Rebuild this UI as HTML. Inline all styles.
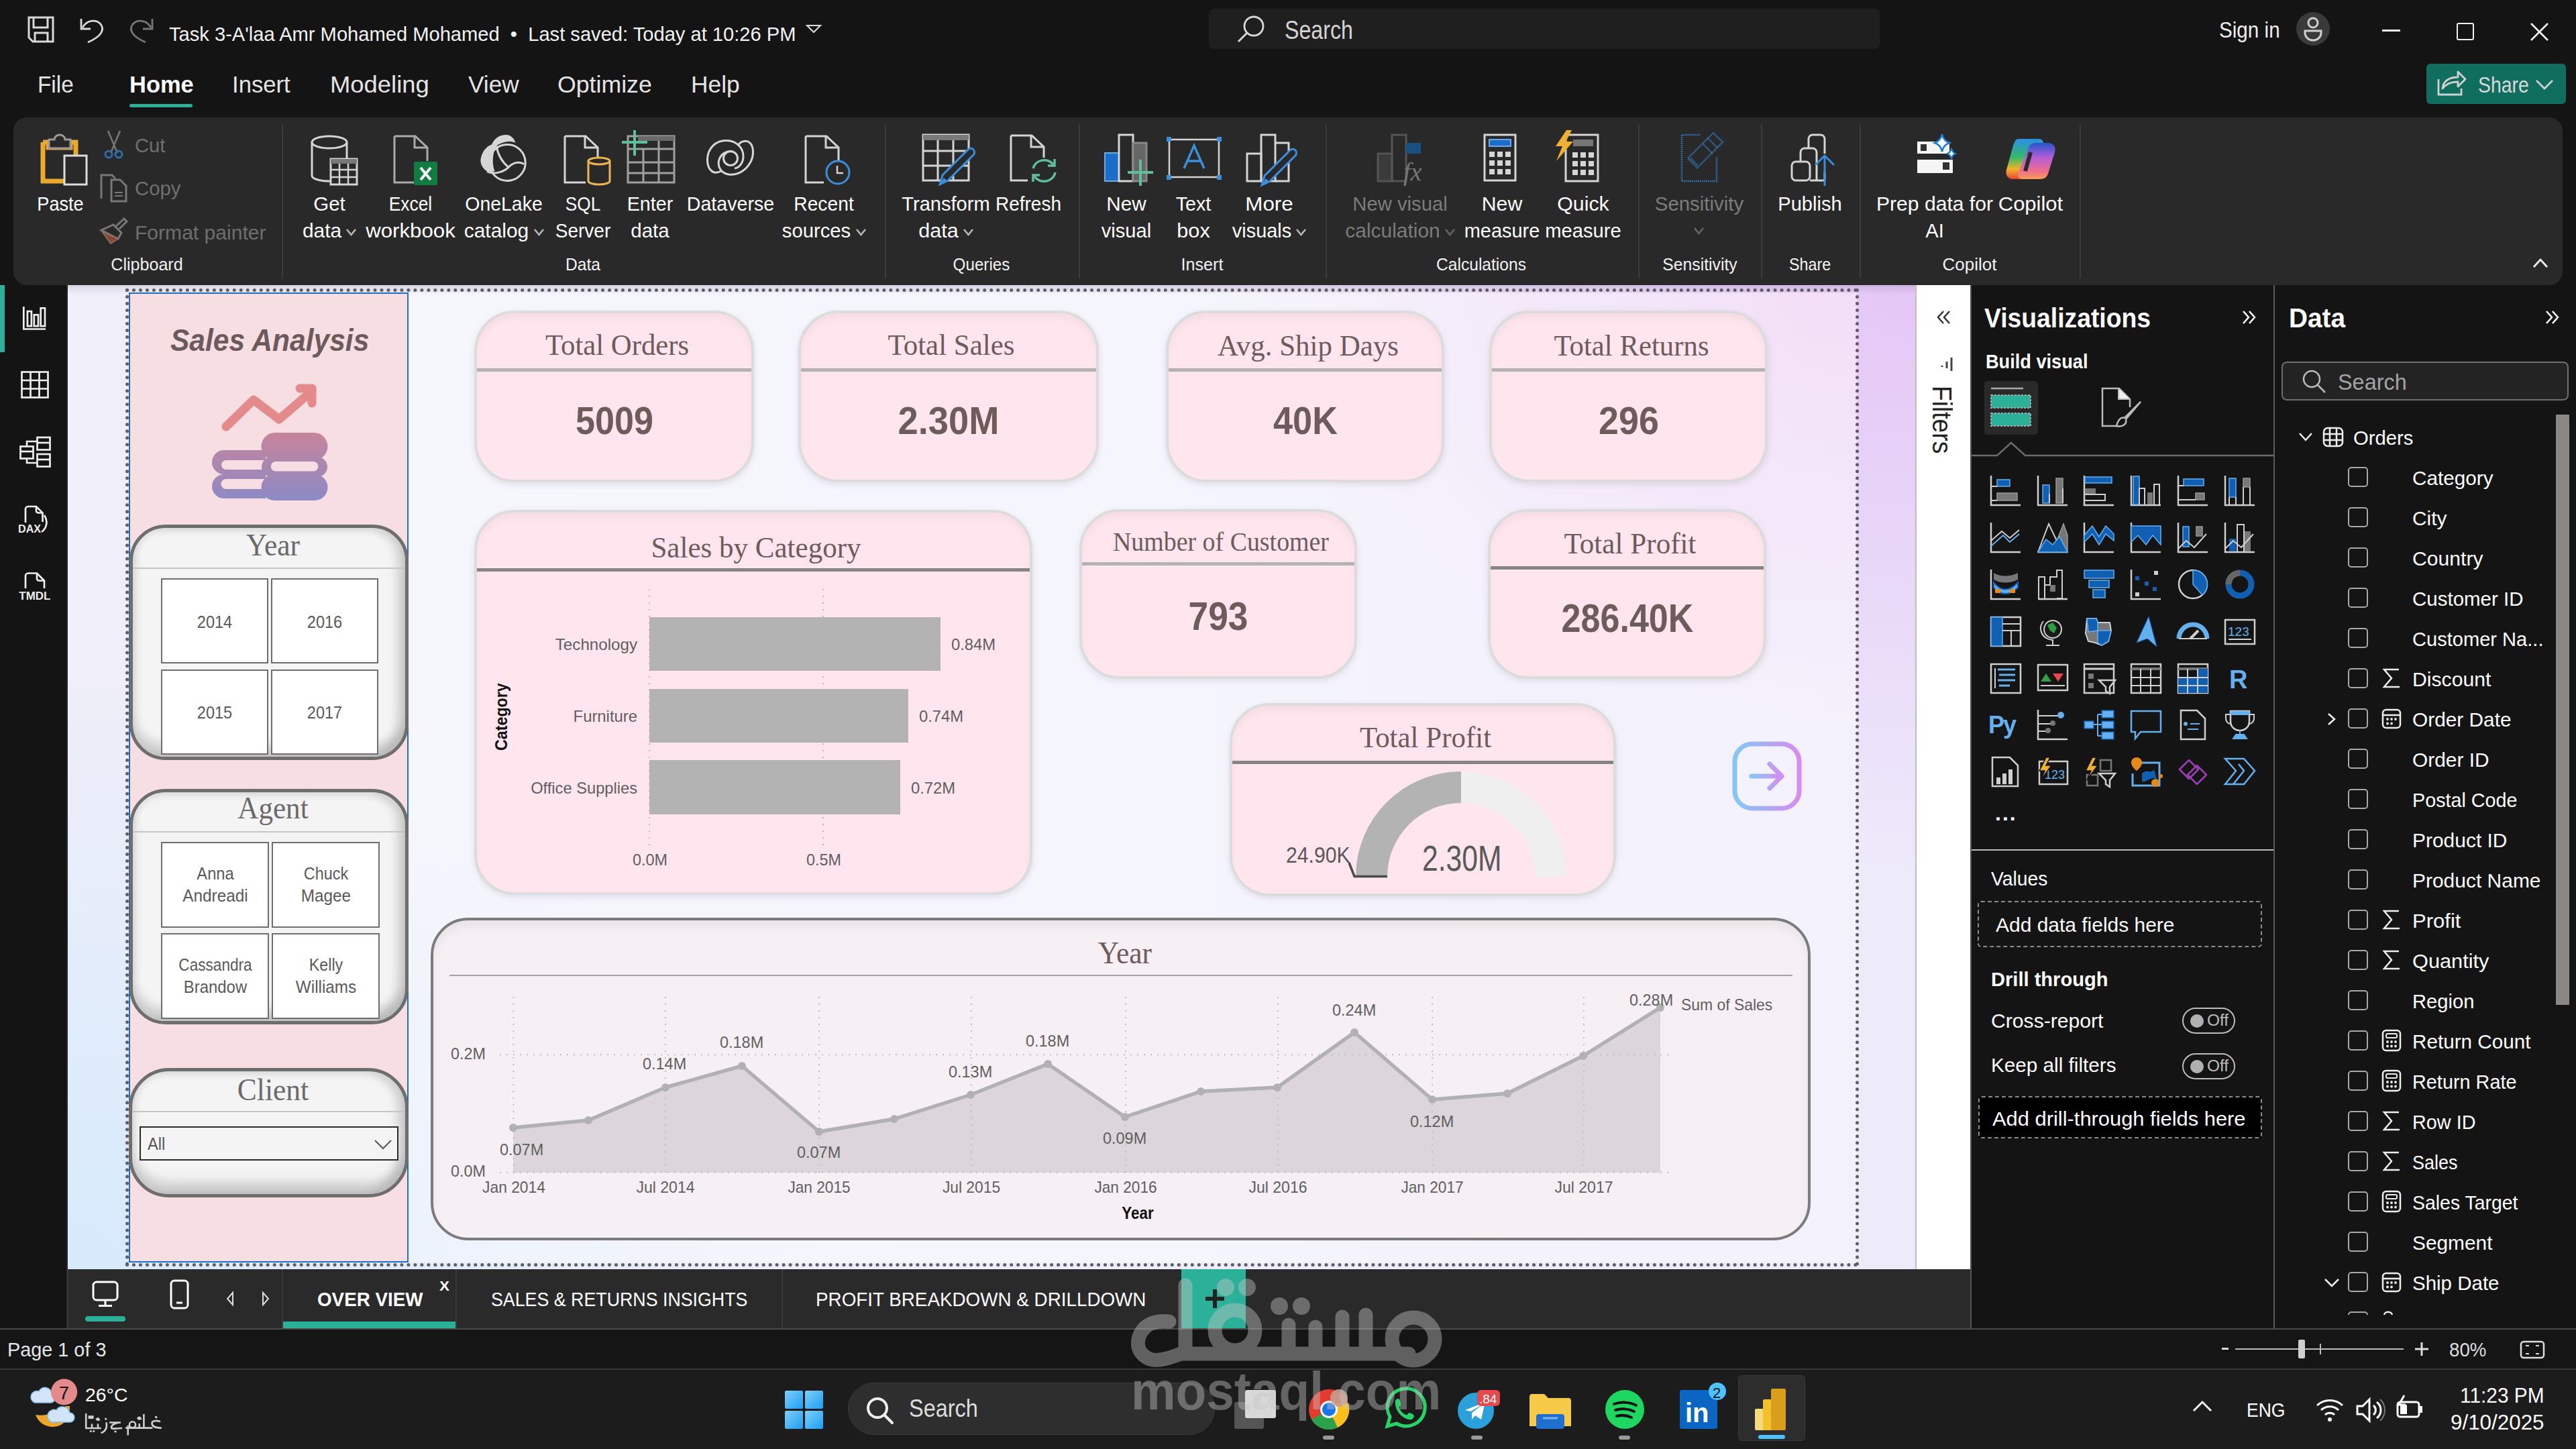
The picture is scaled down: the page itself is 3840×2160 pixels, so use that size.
<!DOCTYPE html>
<html><head><meta charset="utf-8">
<style>
*{margin:0;padding:0;box-sizing:border-box}
html,body{width:3840px;height:2160px;overflow:hidden;background:#141414;font-family:"Liberation Sans",sans-serif;color:#fff}
.a{position:absolute}
.t{position:absolute;white-space:nowrap;line-height:1}
svg{position:absolute;overflow:visible}
.sep{position:absolute;top:186px;width:2px;height:229px;background:#3c3c3c}
.card{position:absolute;background:#ffe6ee;border:4px solid #dcdcdc;border-radius:60px;box-shadow:0 3px 10px rgba(120,100,120,.16), inset 0 8px 10px rgba(0,0,0,.035)}
.hl{position:absolute;height:5px;background:#b1b1b1}
.slc{position:absolute;background:#f4f4f4;border:5px solid #6e6e6e;box-shadow:inset 0 -18px 16px rgba(0,0,0,.16), inset 0 8px 10px rgba(0,0,0,.04), inset 6px 0 10px rgba(0,0,0,.025), inset -14px 0 14px rgba(0,0,0,.11)}
.yb{position:absolute;background:#fff;border:2px solid #6e6e6e}
</style></head><body>
<div class="a" style="left:0;top:0;width:3840px;height:2160px;background:#141414"></div>
<div class="a" style="left:20px;top:175px;width:3800px;height:250px;background:#292929;border-radius:20px"></div>
<svg style="left:41px;top:24px;" width="40" height="40" viewBox="0 0 40 40"><path d="M2,2 H38 V38 H8 L2,32 Z" fill="none" stroke="#d8d8d8" stroke-width="3"/><path d="M9,2 V17 H30 V2" fill="none" stroke="#d8d8d8" stroke-width="3"/><path d="M11,38 V25 H30 V38" fill="none" stroke="#d8d8d8" stroke-width="3"/></svg>
<svg style="left:119px;top:26px;" width="36" height="40" viewBox="0 0 36 40"><path d="M2,2 V17 H16" fill="none" stroke="#d8d8d8" stroke-width="2.8"/><path d="M4,15 C10,4 24,2 31,10 C37,18 33,28 12,37" fill="none" stroke="#d8d8d8" stroke-width="2.8"/></svg>
<svg style="left:193px;top:26px;" width="36" height="40" viewBox="0 0 36 40"><path d="M34,2 V17 H20" fill="none" stroke="#777" stroke-width="2.8"/><path d="M32,15 C26,4 12,2 5,10 C-1,18 3,28 24,37" fill="none" stroke="#777" stroke-width="2.8"/></svg>
<div class="t" id="f1" style="left:252px;top:35.9px;font-size:29.5px;color:#f2f2f2;transform:scaleX(0.9870);transform-origin:0 0;"><span>Task 3-A'laa Amr Mohamed Mohamed&nbsp; •&nbsp; Last saved: Today at 10:26 PM</span></div>
<svg style="left:1201px;top:36px;" width="24" height="14" viewBox="0 0 24 14"><path d="M2,2 H22 L12,12 Z" fill="none" stroke="#ddd" stroke-width="2"/></svg>
<div class="a" style="left:1802px;top:13px;width:1000px;height:60px;background:#1f1f1f;border-radius:8px"></div>
<svg style="left:1844px;top:22px;" width="42" height="42" viewBox="0 0 42 42"><circle cx="25" cy="17" r="14" fill="none" stroke="#d8d8d8" stroke-width="2.8"/><line x1="15" y1="27" x2="2" y2="40" stroke="#d8d8d8" stroke-width="2.8"/></svg>
<div class="t" id="f2" style="left:1915px;top:26.3px;font-size:38px;color:#d4d4d4;transform:scaleX(0.8463);transform-origin:0 0;"><span>Search</span></div>
<div class="t" id="f3" style="left:3308px;top:27.1px;font-size:34px;color:#eeeeee;transform:scaleX(0.8724);transform-origin:0 0;"><span>Sign in</span></div>
<svg style="left:3422px;top:17px;" width="52" height="52" viewBox="0 0 52 52"><circle cx="26" cy="26" r="25" fill="#3a3a3a"/><circle cx="26" cy="17" r="7" fill="none" stroke="#cfcfcf" stroke-width="3"/><path d="M14,29 H38 V32 A12,11 0 0 1 14,32 Z" fill="none" stroke="#cfcfcf" stroke-width="3"/></svg>
<div class="a" style="left:3551px;top:44px;width:27px;height:3px;background:#eee"></div>
<div class="a" style="left:3662px;top:34px;width:26px;height:26px;border:2.5px solid #eee;border-radius:3px"></div>
<svg style="left:3772px;top:34px;" width="27" height="27" viewBox="0 0 27 27"><path d="M1,1 L26,26 M26,1 L1,26" stroke="#eee" stroke-width="2.6"/></svg>
<div class="t" id="f4" style="left:56px;top:108.6px;font-size:34.6px;color:#e4e4e4;transform:scaleX(0.9643);transform-origin:0 0;"><span>File</span></div>
<div class="t" id="f5" style="left:193px;top:108.6px;font-size:34.6px;color:#ffffff;font-weight:bold;transform:scaleX(0.9964);transform-origin:0 0;"><span>Home</span></div>
<div class="t" id="f6" style="left:346px;top:108.6px;font-size:34.6px;color:#e4e4e4;transform:scaleX(1.0028);transform-origin:0 0;"><span>Insert</span></div>
<div class="t" id="f7" style="left:492px;top:108.6px;font-size:34.6px;color:#e4e4e4;transform:scaleX(1.0527);transform-origin:0 0;"><span>Modeling</span></div>
<div class="t" id="f8" style="left:698px;top:108.6px;font-size:34.6px;color:#e4e4e4;transform:scaleX(1.0189);transform-origin:0 0;"><span>View</span></div>
<div class="t" id="f9" style="left:831px;top:108.6px;font-size:34.6px;color:#e4e4e4;transform:scaleX(1.0316);transform-origin:0 0;"><span>Optimize</span></div>
<div class="t" id="f10" style="left:1030px;top:108.6px;font-size:34.6px;color:#e4e4e4;transform:scaleX(1.0226);transform-origin:0 0;"><span>Help</span></div>
<div class="a" style="left:193px;top:155px;width:94px;height:5px;background:#2bb09a;border-radius:3px"></div>
<div class="a" style="left:3617px;top:95px;width:208px;height:60px;background:#0f6e5e;border-radius:6px"></div>
<svg style="left:3632px;top:104px;" width="46" height="40" viewBox="0 0 46 40"><path d="M3,14 V37 H37 V28" fill="none" stroke="#d0d0d0" stroke-width="2.8"/><path d="M9,28 C10,16 20,11 32,11 V3 L43,14 L32,25 V18 C22,18 14,21 9,28Z" fill="none" stroke="#d0d0d0" stroke-width="2.8" stroke-linejoin="round"/></svg>
<div class="t" id="f11" style="left:3694px;top:109.1px;font-size:34px;color:#d8d8d8;transform:scaleX(0.8343);transform-origin:0 0;"><span>Share</span></div>
<svg style="left:3779px;top:118px;" width="28" height="17" viewBox="0 0 28 17"><polyline points="2,2 14,14 26,2" fill="none" stroke="#d0d0d0" stroke-width="2.8"/></svg>
<div class="sep" style="left:420px"></div>
<div class="sep" style="left:1319px"></div>
<div class="sep" style="left:1608px"></div>
<div class="sep" style="left:1976px"></div>
<div class="sep" style="left:2442px"></div>
<div class="sep" style="left:2625px"></div>
<div class="sep" style="left:2772px"></div>
<div class="sep" style="left:3100px"></div>
<div class="t" id="f12" style="left:-780.6px;width:2000px;text-align:center;top:381.8px;font-size:25px;color:#f2f2f2;transform:scaleX(1.0022);transform-origin:50% 0;"><span>Clipboard</span></div>
<div class="t" id="f13" style="left:-131px;width:2000px;text-align:center;top:381.8px;font-size:25px;color:#f2f2f2;transform:scaleX(0.9837);transform-origin:50% 0;"><span>Data</span></div>
<div class="t" id="f14" style="left:463px;width:2000px;text-align:center;top:381.8px;font-size:25px;color:#f2f2f2;transform:scaleX(0.9681);transform-origin:50% 0;"><span>Queries</span></div>
<div class="t" id="f15" style="left:792px;width:2000px;text-align:center;top:381.8px;font-size:25px;color:#f2f2f2;transform:scaleX(1.0051);transform-origin:50% 0;"><span>Insert</span></div>
<div class="t" id="f16" style="left:1208px;width:2000px;text-align:center;top:381.8px;font-size:25px;color:#f2f2f2;transform:scaleX(0.9836);transform-origin:50% 0;"><span>Calculations</span></div>
<div class="t" id="f17" style="left:1534px;width:2000px;text-align:center;top:381.8px;font-size:25px;color:#f2f2f2;transform:scaleX(0.9885);transform-origin:50% 0;"><span>Sensitivity</span></div>
<div class="t" id="f18" style="left:1698px;width:2000px;text-align:center;top:381.8px;font-size:25px;color:#f2f2f2;transform:scaleX(0.9330);transform-origin:50% 0;"><span>Share</span></div>
<div class="t" id="f19" style="left:1936px;width:2000px;text-align:center;top:381.8px;font-size:25px;color:#f2f2f2;transform:scaleX(1.0375);transform-origin:50% 0;"><span>Copilot</span></div>
<div class="t" id="f20" style="left:-910px;width:2000px;text-align:center;top:289.1px;font-size:29.3px;color:#ffffff;transform:scaleX(0.9272);transform-origin:50% 0;"><span>Paste</span></div>
<div class="t" id="f21" style="left:-509px;width:2000px;text-align:center;top:289.1px;font-size:29.3px;color:#ffffff;transform:scaleX(1.0049);transform-origin:50% 0;"><span>Get</span></div>
<div class="t" id="f22" style="left:-520px;width:2000px;text-align:center;top:329.1px;font-size:29.3px;color:#ffffff;transform:scaleX(1.0199);transform-origin:50% 0;"><span>data</span></div>
<svg style="left:516px;top:341px;" width="15" height="11" viewBox="0 0 15 11"><polyline points="1,1 7.5,9 14,1" fill="none" stroke="#b8b8b8" stroke-width="2.6"/></svg>
<div class="t" id="f23" style="left:-388px;width:2000px;text-align:center;top:289.1px;font-size:29.3px;color:#ffffff;transform:scaleX(0.8998);transform-origin:50% 0;"><span>Excel</span></div>
<div class="t" id="f24" style="left:-388px;width:2000px;text-align:center;top:329.1px;font-size:29.3px;color:#ffffff;transform:scaleX(1.0644);transform-origin:50% 0;"><span>workbook</span></div>
<div class="t" id="f25" style="left:-249px;width:2000px;text-align:center;top:289.1px;font-size:29.3px;color:#ffffff;transform:scaleX(0.9711);transform-origin:50% 0;"><span>OneLake</span></div>
<div class="t" id="f26" style="left:-260px;width:2000px;text-align:center;top:329.1px;font-size:29.3px;color:#ffffff;transform:scaleX(1.0210);transform-origin:50% 0;"><span>catalog</span></div>
<svg style="left:796px;top:341px;" width="15" height="11" viewBox="0 0 15 11"><polyline points="1,1 7.5,9 14,1" fill="none" stroke="#b8b8b8" stroke-width="2.6"/></svg>
<div class="t" id="f27" style="left:-131px;width:2000px;text-align:center;top:289.1px;font-size:29.3px;color:#ffffff;transform:scaleX(0.8949);transform-origin:50% 0;"><span>SQL</span></div>
<div class="t" id="f28" style="left:-131px;width:2000px;text-align:center;top:329.1px;font-size:29.3px;color:#ffffff;transform:scaleX(0.9556);transform-origin:50% 0;"><span>Server</span></div>
<div class="t" id="f29" style="left:-31px;width:2000px;text-align:center;top:289.1px;font-size:29.3px;color:#ffffff;transform:scaleX(0.9776);transform-origin:50% 0;"><span>Enter</span></div>
<div class="t" id="f30" style="left:-31px;width:2000px;text-align:center;top:329.1px;font-size:29.3px;color:#ffffff;transform:scaleX(1.0076);transform-origin:50% 0;"><span>data</span></div>
<div class="t" id="f31" style="left:89px;width:2000px;text-align:center;top:289.1px;font-size:29.3px;color:#ffffff;transform:scaleX(0.9770);transform-origin:50% 0;"><span>Dataverse</span></div>
<div class="t" id="f32" style="left:228px;width:2000px;text-align:center;top:289.1px;font-size:29.3px;color:#ffffff;transform:scaleX(0.9638);transform-origin:50% 0;"><span>Recent</span></div>
<div class="t" id="f33" style="left:217px;width:2000px;text-align:center;top:329.1px;font-size:29.3px;color:#ffffff;transform:scaleX(0.9987);transform-origin:50% 0;"><span>sources</span></div>
<svg style="left:1276px;top:341px;" width="15" height="11" viewBox="0 0 15 11"><polyline points="1,1 7.5,9 14,1" fill="none" stroke="#b8b8b8" stroke-width="2.6"/></svg>
<div class="t" id="f34" style="left:410px;width:2000px;text-align:center;top:289.1px;font-size:29.3px;color:#ffffff;transform:scaleX(0.9929);transform-origin:50% 0;"><span>Transform</span></div>
<div class="t" id="f35" style="left:399px;width:2000px;text-align:center;top:329.1px;font-size:29.3px;color:#ffffff;transform:scaleX(1.0427);transform-origin:50% 0;"><span>data</span></div>
<svg style="left:1436px;top:341px;" width="15" height="11" viewBox="0 0 15 11"><polyline points="1,1 7.5,9 14,1" fill="none" stroke="#b8b8b8" stroke-width="2.6"/></svg>
<div class="t" id="f36" style="left:533px;width:2000px;text-align:center;top:289.1px;font-size:29.3px;color:#ffffff;transform:scaleX(0.9559);transform-origin:50% 0;"><span>Refresh</span></div>
<div class="t" id="f37" style="left:679px;width:2000px;text-align:center;top:289.1px;font-size:29.3px;color:#ffffff;transform:scaleX(1.0146);transform-origin:50% 0;"><span>New</span></div>
<div class="t" id="f38" style="left:679px;width:2000px;text-align:center;top:329.1px;font-size:29.3px;color:#ffffff;transform:scaleX(0.9941);transform-origin:50% 0;"><span>visual</span></div>
<div class="t" id="f39" style="left:779px;width:2000px;text-align:center;top:289.1px;font-size:29.3px;color:#ffffff;transform:scaleX(0.9764);transform-origin:50% 0;"><span>Text</span></div>
<div class="t" id="f40" style="left:779px;width:2000px;text-align:center;top:329.1px;font-size:29.3px;color:#ffffff;transform:scaleX(1.0469);transform-origin:50% 0;"><span>box</span></div>
<div class="t" id="f41" style="left:892px;width:2000px;text-align:center;top:289.1px;font-size:29.3px;color:#ffffff;transform:scaleX(1.0706);transform-origin:50% 0;"><span>More</span></div>
<div class="t" id="f42" style="left:881px;width:2000px;text-align:center;top:329.1px;font-size:29.3px;color:#ffffff;transform:scaleX(0.9877);transform-origin:50% 0;"><span>visuals</span></div>
<svg style="left:1932px;top:341px;" width="15" height="11" viewBox="0 0 15 11"><polyline points="1,1 7.5,9 14,1" fill="none" stroke="#b8b8b8" stroke-width="2.6"/></svg>
<div class="t" id="f43" style="left:1087px;width:2000px;text-align:center;top:289.1px;font-size:29.3px;color:#7c7c7c;transform:scaleX(0.9986);transform-origin:50% 0;"><span>New visual</span></div>
<div class="t" id="f44" style="left:1076px;width:2000px;text-align:center;top:329.1px;font-size:29.3px;color:#7c7c7c;transform:scaleX(1.0219);transform-origin:50% 0;"><span>calculation</span></div>
<svg style="left:2154px;top:341px;" width="15" height="11" viewBox="0 0 15 11"><polyline points="1,1 7.5,9 14,1" fill="none" stroke="#666" stroke-width="2.6"/></svg>
<div class="t" id="f45" style="left:1238.5px;width:2000px;text-align:center;top:289.1px;font-size:29.3px;color:#ffffff;transform:scaleX(1.0317);transform-origin:50% 0;"><span>New</span></div>
<div class="t" id="f46" style="left:1238.5px;width:2000px;text-align:center;top:329.1px;font-size:29.3px;color:#ffffff;transform:scaleX(0.9867);transform-origin:50% 0;"><span>measure</span></div>
<div class="t" id="f47" style="left:1360px;width:2000px;text-align:center;top:289.1px;font-size:29.3px;color:#ffffff;transform:scaleX(1.0344);transform-origin:50% 0;"><span>Quick</span></div>
<div class="t" id="f48" style="left:1360px;width:2000px;text-align:center;top:329.1px;font-size:29.3px;color:#ffffff;transform:scaleX(0.9954);transform-origin:50% 0;"><span>measure</span></div>
<div class="t" id="f49" style="left:1533px;width:2000px;text-align:center;top:289.1px;font-size:29.3px;color:#7c7c7c;transform:scaleX(1.0044);transform-origin:50% 0;"><span>Sensitivity</span></div>
<div class="t" id="f50" style="left:1698px;width:2000px;text-align:center;top:289.1px;font-size:29.3px;color:#ffffff;transform:scaleX(0.9935);transform-origin:50% 0;"><span>Publish</span></div>
<div class="t" id="f51" style="left:1884px;width:2000px;text-align:center;top:289.1px;font-size:29.3px;color:#ffffff;transform:scaleX(1.0271);transform-origin:50% 0;"><span>Prep data for</span></div>
<div class="t" id="f52" style="left:1884px;width:2000px;text-align:center;top:329.1px;font-size:29.3px;color:#ffffff;transform:scaleX(0.9920);transform-origin:50% 0;"><span>AI</span></div>
<div class="t" id="f53" style="left:2027px;width:2000px;text-align:center;top:289.1px;font-size:29.3px;color:#ffffff;transform:scaleX(1.0577);transform-origin:50% 0;"><span>Copilot</span></div>
<svg style="left:2525px;top:339px;" width="15" height="11" viewBox="0 0 15 11"><polyline points="1,1 7.5,9 14,1" fill="none" stroke="#666" stroke-width="2.6"/></svg>
<div class="t" id="f54" style="left:201px;top:201.7px;font-size:29.3px;color:#6f6f6f;transform:scaleX(0.9972);transform-origin:0 0;"><span>Cut</span></div>
<div class="t" id="f55" style="left:201px;top:266.1px;font-size:29.3px;color:#6f6f6f;transform:scaleX(1.0009);transform-origin:0 0;"><span>Copy</span></div>
<div class="t" id="f56" style="left:201px;top:332.1px;font-size:29.3px;color:#6f6f6f;transform:scaleX(1.0260);transform-origin:0 0;"><span>Format painter</span></div>
<svg style="left:3776px;top:384px;" width="22" height="16" viewBox="0 0 22 16"><polyline points="1,14 11,3 21,14" fill="none" stroke="#eee" stroke-width="2.8"/></svg>
<svg style="left:60px;top:200px;" width="72" height="78" viewBox="0 0 72 78"><path d="M4,12 H12 V20 H45 V12 H53 V36" fill="none" stroke="#e8a92c" stroke-width="7"/><path d="M4,12 V70 H35" fill="none" stroke="#e8a92c" stroke-width="7"/><path d="M13,21 V8 H21 A8,7 0 0 1 37,8 H45 V21 Z" fill="#292929" stroke="#9a9a9a" stroke-width="3"/><rect x="36" y="32" width="33" height="43" fill="#292929" stroke="#dcdcdc" stroke-width="3"/></svg>
<svg style="left:155px;top:194px;" width="30" height="44" viewBox="0 0 30 44"><path d="M6,1 L20,34 M24,1 L10,34" stroke="#777" stroke-width="2.5"/><circle cx="7" cy="36" r="5" fill="none" stroke="#2e6da4" stroke-width="3"/><circle cx="22" cy="36" r="5" fill="none" stroke="#2e6da4" stroke-width="3"/></svg>
<svg style="left:149px;top:259px;" width="42" height="43" viewBox="0 0 42 43"><path d="M2,37 V2 H18 L23,7" fill="none" stroke="#777" stroke-width="3"/><path d="M17,9 H30 L39,18 V41 H17 Z" fill="none" stroke="#777" stroke-width="3"/><path d="M22,28 H34 M22,33 H34" stroke="#777" stroke-width="2"/></svg>
<svg style="left:149px;top:323px;" width="44" height="42" viewBox="0 0 44 42"><path d="M24,14 L36,3 L40,7 L29,18" fill="none" stroke="#777" stroke-width="3"/><path d="M20,12 L32,24 L27,33 L2,20 Z" fill="none" stroke="#777" stroke-width="3"/><path d="M3,22 L16,40 L27,33 Z" fill="#8a4a2a" stroke="#8a6a6a" stroke-width="2"/></svg>
<svg style="left:462px;top:200px;" width="72" height="78" viewBox="0 0 72 78"><path d="M3,12 V62 A26,8 0 0 0 30,70" fill="none" stroke="#d4d4d4" stroke-width="3"/><ellipse cx="29" cy="12" rx="26" ry="9" fill="none" stroke="#d4d4d4" stroke-width="3"/><path d="M55,12 V36" stroke="#d4d4d4" stroke-width="3"/><rect x="31" y="37" width="39" height="38" fill="#292929" stroke="#d4d4d4" stroke-width="3"/><rect x="31" y="37" width="39" height="7" fill="#777"/><path d="M31,53 H70 M31,64 H70 M44,44 V75 M57,44 V75" stroke="#d4d4d4" stroke-width="2.5"/></svg>
<svg style="left:585px;top:200px;" width="68" height="78" viewBox="0 0 68 78"><path d="M3,3 H34 L52,20 V40 M32,72 H3 V3" fill="none" stroke="#aaa" stroke-width="3"/><path d="M33,3 V20 H52" fill="none" stroke="#aaa" stroke-width="3"/><rect x="32" y="41" width="35" height="35" rx="2" fill="#107c41"/><path d="M42,50 L57,68 M57,50 L42,68" stroke="#fff" stroke-width="4"/></svg>
<svg style="left:715px;top:198px;" width="72" height="76" viewBox="0 0 72 76"><path d="M11,57.6 C3,52 0,44 2,37 C4,28 10,20 18,17.5 C22,8 30,3 39,3 C47,3 52,9 53.3,14.8 C45,11 33,14 25,19.6 C19,30 18,46 22.6,57.6 Z" fill="#d6d6d6"/><circle cx="41.2" cy="44.4" r="27" fill="none" stroke="#d6d6d6" stroke-width="3"/><path d="M25,19.6 C27,32 34,44 43,51.4 M11,57.6 C20,62 34,60 43,51.4 C49,45 57,42 66.4,46.5" fill="none" stroke="#d6d6d6" stroke-width="3"/></svg>
<svg style="left:839px;top:200px;" width="72" height="78" viewBox="0 0 72 78"><path d="M3,3 H34 L52,20 V34 M34,72 H3 V3" fill="none" stroke="#d4d4d4" stroke-width="3"/><path d="M33,3 V20 H52" fill="none" stroke="#d4d4d4" stroke-width="3"/><path d="M38,40 V70 A16,5 0 0 0 70,70 V40" fill="#292929" stroke="#f0b550" stroke-width="3"/><ellipse cx="54" cy="40" rx="16" ry="5" fill="#292929" stroke="#f0b550" stroke-width="3"/></svg>
<svg style="left:927px;top:194px;" width="80" height="84" viewBox="0 0 80 84"><rect x="9" y="9" width="69" height="69" fill="none" stroke="#a0a0a0" stroke-width="3"/><rect x="24" y="9" width="54" height="7" fill="#6a6a6a"/><path d="M9,28 H78 M9,48 H78 M9,64 H78 M32,28 V78 M55,16 V78" stroke="#a0a0a0" stroke-width="3"/><path d="M0,18 H38 M19,0 V38" stroke="#5fbf9a" stroke-width="4"/></svg>
<svg style="left:1050px;top:205px;" width="80" height="62" viewBox="0 0 80 62"><g fill="none" stroke="#d6d6d6" stroke-width="3"><path d="M25,50 C12,57 4,46 4.5,32 C5,16 17,4 33,4.5 C48,5 58,15 58,28 C58,38 52,45 45,46"/><path d="M51,10.5 C55,5 63,3.5 68,8 C74,14 74,28 68,38 C61,50 48,57 36,55 C24,53 19,42 22,33 C25,24 34,19 42,21"/><circle cx="39" cy="31" r="10.5"/></g></svg>
<svg style="left:1198px;top:200px;" width="72" height="78" viewBox="0 0 72 78"><path d="M3,3 H34 L52,20 V40 M30,72 H3 V3" fill="none" stroke="#d4d4d4" stroke-width="3"/><path d="M33,3 V20 H52" fill="none" stroke="#d4d4d4" stroke-width="3"/><circle cx="51" cy="57" r="17" fill="#292929" stroke="#3b8fdb" stroke-width="3"/><path d="M50,47 V58 H59" fill="none" stroke="#d4d4d4" stroke-width="2.5"/></svg>
<svg style="left:1374px;top:199px;" width="80" height="80" viewBox="0 0 80 80"><rect x="2" y="2" width="68" height="68" fill="none" stroke="#d4d4d4" stroke-width="3"/><rect x="2" y="2" width="68" height="8" fill="#7a7a7a"/><path d="M2,26 H70 M2,48 H70 M24,10 V70 M47,10 V70" stroke="#d4d4d4" stroke-width="3"/><path d="M27,76 L31,62 L69,24 A5,5 0 0 1 77,32 L39,70 Z" fill="#292929" stroke="#3b8fdb" stroke-width="3"/><path d="M26,77 L33,66 L38,71Z" fill="#3b8fdb"/></svg>
<svg style="left:1504px;top:199px;" width="74" height="80" viewBox="0 0 74 80"><path d="M3,3 H34 L52,20 V36 M28,70 H3 V3" fill="none" stroke="#d4d4d4" stroke-width="3"/><path d="M33,3 V20 H52" fill="none" stroke="#d4d4d4" stroke-width="3"/><path d="M36,52 A17,16 0 0 1 66,46 M69,58 A17,16 0 0 1 38,64" fill="none" stroke="#5fbf9a" stroke-width="3.5"/><path d="M68,38 V48 H58 M36,72 V62 H46" fill="none" stroke="#5fbf9a" stroke-width="3.5"/></svg>
<svg style="left:1645px;top:199px;" width="76" height="80" viewBox="0 0 76 80"><rect x="2" y="29" width="21" height="42" fill="#1a6ec9" stroke="#6aaae8" stroke-width="2"/><rect x="23" y="2" width="21" height="69" fill="#292929" stroke="#d4d4d4" stroke-width="3"/><rect x="44" y="14" width="20" height="57" fill="#666" stroke="#888" stroke-width="3"/><path d="M36,58 H74 M55,39 V78" stroke="#5fbf9a" stroke-width="4"/></svg>
<svg style="left:1739px;top:204px;" width="82" height="64" viewBox="0 0 82 64"><rect x="4" y="4" width="74" height="56" fill="none" stroke="#d4d4d4" stroke-width="2.5"/><rect x="0" y="0" width="7" height="7" fill="#3b8fdb"/><rect x="75" y="0" width="7" height="7" fill="#3b8fdb"/><rect x="0" y="57" width="7" height="7" fill="#3b8fdb"/><rect x="75" y="57" width="7" height="7" fill="#3b8fdb"/><path d="M26,47 L41,13 L56,47 M31,36 H51" fill="none" stroke="#3b8fdb" stroke-width="3.5"/></svg>
<svg style="left:1857px;top:199px;" width="78" height="80" viewBox="0 0 78 80"><rect x="2" y="30" width="21" height="41" fill="none" stroke="#d4d4d4" stroke-width="3"/><rect x="23" y="2" width="21" height="69" fill="none" stroke="#d4d4d4" stroke-width="3"/><path d="M44,14 H64 V71 H44" fill="none" stroke="#d4d4d4" stroke-width="3"/><path d="M24,77 L28,63 L66,25 A5,5 0 0 1 74,33 L36,71 Z" fill="#292929" stroke="#3b8fdb" stroke-width="3"/><path d="M23,78 L30,67 L35,72Z" fill="#3b8fdb"/></svg>
<svg style="left:2052px;top:199px;" width="74" height="80" viewBox="0 0 74 80"><rect x="2" y="30" width="21" height="41" fill="#3a3a3a" stroke="#555" stroke-width="3"/><rect x="23" y="2" width="21" height="69" fill="none" stroke="#555" stroke-width="3"/><rect x="44" y="14" width="22" height="16" fill="#1b4f7f"/><text x="40" y="70" font-family="Liberation Serif" font-style="italic" font-size="38" fill="#777">fx</text></svg>
<svg style="left:2211px;top:199px;" width="52" height="74" viewBox="0 0 52 74"><rect x="2" y="2" width="46" height="68" fill="none" stroke="#d4d4d4" stroke-width="3"/><rect x="9" y="9" width="32" height="10" fill="#1a6ec9" stroke="#6aaae8" stroke-width="2"/><rect x="9" y="27" width="8" height="8" fill="#d4d4d4"/><rect x="21" y="27" width="8" height="8" fill="#d4d4d4"/><rect x="33" y="27" width="8" height="8" fill="#d4d4d4"/><rect x="9" y="40" width="8" height="8" fill="#d4d4d4"/><rect x="21" y="40" width="8" height="8" fill="#d4d4d4"/><rect x="33" y="40" width="8" height="8" fill="#d4d4d4"/><rect x="9" y="53" width="8" height="8" fill="#d4d4d4"/><rect x="21" y="53" width="8" height="8" fill="#d4d4d4"/><rect x="33" y="53" width="8" height="8" fill="#d4d4d4"/></svg>
<svg style="left:2317px;top:194px;" width="70" height="80" viewBox="0 0 70 80"><rect x="17" y="7" width="48" height="69" fill="none" stroke="#d4d4d4" stroke-width="3"/><rect x="28" y="14" width="30" height="10" fill="#777"/><rect x="27" y="33" width="8" height="8" fill="#d4d4d4"/><rect x="39" y="33" width="8" height="8" fill="#d4d4d4"/><rect x="51" y="33" width="8" height="8" fill="#d4d4d4"/><rect x="27" y="46" width="8" height="8" fill="#d4d4d4"/><rect x="39" y="46" width="8" height="8" fill="#d4d4d4"/><rect x="51" y="46" width="8" height="8" fill="#d4d4d4"/><rect x="27" y="59" width="8" height="8" fill="#d4d4d4"/><rect x="39" y="59" width="8" height="8" fill="#d4d4d4"/><rect x="51" y="59" width="8" height="8" fill="#d4d4d4"/><path d="M18,0 L2,24 H12 L3,46 L28,17 H17 L26,0 Z" fill="#f0b030"/></svg>
<svg style="left:2504px;top:194px;" width="72" height="80" viewBox="0 0 72 80"><path d="M30,7 H3 V76 H55 V40" fill="none" stroke="#2e6da4" stroke-width="2.5" stroke-dasharray="2,1"/><path d="M12,42 L34,20 L48,34 L26,56Z M16,42 L26,52 M42,12 L56,26 L64,18 L50,4Z M34,20 L42,12 M48,34 L56,26" fill="none" stroke="#2e6da4" stroke-width="2.5" stroke-dasharray="2,1"/></svg>
<svg style="left:2669px;top:199px;" width="72" height="80" viewBox="0 0 72 80"><rect x="2" y="42" width="27" height="28" rx="6" fill="none" stroke="#d4d4d4" stroke-width="3"/><path d="M15,42 V28 A6,6 0 0 1 21,22 H33 A6,6 0 0 1 39,28 V70 M39,70 H29" fill="none" stroke="#d4d4d4" stroke-width="3"/><path d="M27,22 V8 A6,6 0 0 1 33,2 H45 A6,6 0 0 1 51,8 V30 M51,70 H39 M51,58 V70" fill="none" stroke="#d4d4d4" stroke-width="3"/><path d="M51,78 V33 M37,47 L51,33 L65,47" fill="none" stroke="#3b8fdb" stroke-width="3"/></svg>
<svg style="left:2855px;top:199px;" width="66" height="64" viewBox="0 0 66 64"><rect x="2" y="11" width="50" height="20" fill="#f5f5f5" stroke="#292929" stroke-width="2"/><rect x="8" y="16" width="9" height="10" fill="#333"/><rect x="2" y="38" width="55" height="22" fill="#f5f5f5" stroke="#292929" stroke-width="2"/><rect x="41" y="43" width="10" height="11" fill="#333"/><path d="M40,1 Q42,11 51,14 Q42,17 40,27 Q38,17 29,14 Q38,11 40,1Z" fill="#fff" stroke="#1a7fd6" stroke-width="2.5"/><path d="M54,22 Q55,28 60,30 Q55,32 54,38 Q53,32 48,30 Q53,28 54,22Z" fill="#fff" stroke="#1a7fd6" stroke-width="2"/></svg>
<svg style="left:2987px;top:203px" width="80" height="68" viewBox="0 0 80 68"><defs>
<linearGradient id="cp1" x1="0" y1="0" x2="0" y2="1"><stop offset="0" stop-color="#2b8fe8"/><stop offset=".45" stop-color="#33b868"/><stop offset=".75" stop-color="#f0b428"/><stop offset="1" stop-color="#ee4035"/></linearGradient>
<linearGradient id="cp2" x1="0" y1="0" x2="0" y2="1"><stop offset="0" stop-color="#2255cc"/><stop offset=".4" stop-color="#b45bd8"/><stop offset=".8" stop-color="#f2708a"/><stop offset="1" stop-color="#f4a050"/></linearGradient></defs>
<path d="M22,4 H52 C58,4 60,8 58,14 L46,50 C44,58 40,64 30,64 H14 C6,64 2,58 4,50 L14,14 C16,8 18,4 22,4Z" fill="url(#cp1)"/>
<path d="M36,20 C38,12 42,10 50,10 H66 C74,10 78,16 76,24 L66,56 C64,62 60,64 54,64 H28 C22,64 20,60 22,54 Z" fill="url(#cp2)"/>
<path d="M40,24 L32,52" stroke="#292929" stroke-width="6"/></svg>
<div class="a" style="left:0;top:425px;width:7px;height:100px;background:#2bb09a"></div>
<div class="a" style="left:99px;top:425px;width:2px;height:1555px;background:#262626"></div>
<svg style="left:33px;top:456px;" width="36" height="37" viewBox="0 0 36 37"><path d="M2.3,1 V34.5 H35" fill="none" stroke="#eeeeee" stroke-width="2.7"/><rect x="7.9" y="8.1" width="6" height="22" fill="none" stroke="#eeeeee" stroke-width="2.7"/><rect x="17.8" y="13.3" width="6.2" height="16.8" fill="none" stroke="#eeeeee" stroke-width="2.7"/><rect x="27.7" y="3.3" width="6.3" height="26.8" fill="none" stroke="#eeeeee" stroke-width="2.7"/></svg>
<svg style="left:31px;top:553px;" width="42" height="41" viewBox="0 0 42 41"><rect x="1.5" y="1.5" width="39" height="38" fill="none" stroke="#eeeeee" stroke-width="2.7"/><path d="M1.5,14 H40.5 M1.5,26.5 H40.5 M14.5,1.5 V39.5 M27.5,1.5 V39.5" stroke="#eeeeee" stroke-width="2.7"/></svg>
<svg style="left:27px;top:649px;" width="50" height="50" viewBox="0 0 50 50"><g fill="none" stroke="#eeeeee" stroke-width="2.7"><rect x="3.5" y="16.5" width="19" height="18"/><path d="M3.5,24 H22.5"/><rect x="28.5" y="3" width="19" height="18.5"/><path d="M28.5,11 H47.5"/><rect x="28.5" y="28" width="19" height="18.5"/><path d="M28.5,36 H47.5"/><path d="M13,16.5 V9 H28.5 M13,34.5 V41 H28.5"/></g></svg>
<svg style="left:25px;top:752px;" width="50" height="46" viewBox="0 0 50 46"><g fill="none" stroke="#eeeeee" stroke-width="2.7"><path d="M13,27 V7 A4,4 0 0 1 17,3 H29 L38.5,12.5 V26"/><path d="M29,3 V9.5 A3,3 0 0 0 32,12.5 H38.5"/><path d="M41,16 C46,24 46,34 37,41"/></g><text x="2" y="42" font-family="Liberation Sans" font-weight="bold" font-size="16.5" fill="#eeeeee" textLength="34" lengthAdjust="spacingAndGlyphs">DAX</text></svg>
<svg style="left:26px;top:852px;" width="52" height="44" viewBox="0 0 52 44"><g fill="none" stroke="#eeeeee" stroke-width="2.7"><path d="M12,25 V6.5 A4,4 0 0 1 16,2.5 H29 L40,13.5 V25"/><path d="M29,2.5 V10.5 A3,3 0 0 0 32,13.5 H40"/></g><text x="2.3" y="41.6" font-family="Liberation Sans" font-weight="bold" font-size="16.5" fill="#eeeeee" textLength="47" lengthAdjust="spacingAndGlyphs">TMDL</text></svg>
<div class="a" style="left:101px;top:425px;width:2754px;height:1467px;background:radial-gradient(ellipse 45% 60% at 100% 0%,rgba(228,196,246,.95),rgba(228,196,246,0) 100%),radial-gradient(ellipse 40% 60% at 0% 100%,rgba(214,234,252,1),rgba(214,234,252,0) 100%),linear-gradient(90deg,#efeef9,#edeafa)"></div>
<div class="a" style="left:192px;top:436px;width:2576px;height:1446px;background:radial-gradient(ellipse 35% 45% at 100% 0%,rgba(243,222,247,1),rgba(243,222,247,0) 100%),radial-gradient(ellipse 40% 50% at 0% 100%,rgba(230,241,253,1),rgba(230,241,253,0) 100%),linear-gradient(90deg,#f6f6fc,#f5f5fd 60%,#f3f1fc)"></div>
<div class="a" style="left:101px;top:425px;width:2754px;height:14px;background:linear-gradient(rgba(60,60,80,.13),rgba(60,60,80,0))"></div>
<div class="a" style="left:187px;top:430px;width:2584px;height:1458px;border:5px dotted #5e5e5e"></div>
<div class="a" style="left:192px;top:436px;width:417px;height:1446px;background:#f7dee2;border:2px solid #1f6fc7"></div>
<div class="t" id="f57" style="left:254px;top:485.2px;font-size:45.7px;color:#6b5b5d;font-weight:bold;transform:scaleX(0.9308);transform-origin:0 0;font-style:italic;"><span>Sales Analysis</span></div>
<svg style="left:300px;top:560px;" width="210" height="200" viewBox="0 0 210 200"><defs><linearGradient id="cg" x1="0" y1="84" x2="0" y2="186" gradientUnits="userSpaceOnUse"><stop offset="0" stop-color="#c8849a"/><stop offset="1" stop-color="#8c8ac6"/></linearGradient></defs>
<polyline points="37,76 78,36 116,65 165,23" fill="none" stroke="#e58a8a" stroke-width="13" stroke-linecap="round" stroke-linejoin="round"/>
<polyline points="147,19 165,19 165,41" fill="none" stroke="#e58a8a" stroke-width="13" stroke-linecap="round" stroke-linejoin="round"/>
<g fill="url(#cg)">
<path d="M34,111 H96 V147 H34 A18,18 0 0 1 34,111Z"/>
<path d="M34,147 H96 V183 H34 A18,18 0 0 1 34,147Z"/>
</g>
<g fill="#f7dee2"><path d="M37,126 H96 V140 H37 A7,7 0 0 1 37,126Z"/><path d="M37,154 H96 V169 H37 A7.5,7.5 0 0 1 37,154Z"/></g>
<g fill="url(#cg)">
<path d="M110,85 H168 A20.5,20.5 0 0 1 168,126 H110 A20.5,20.5 0 0 1 110,85Z"/>
<path d="M105,121 H173 A15,15 0 0 1 173,151 H105 A15,15 0 0 1 105,121Z"/>
<path d="M109,147 H169 A19.5,19.5 0 0 1 169,186 H109 A19.5,19.5 0 0 1 109,147Z"/>
</g>
<path d="M111,128 H167 A7.25,7.25 0 0 1 167,142.5 H111 A7.25,7.25 0 0 1 111,128Z" fill="#f7dee2"/></svg>
<div class="slc" style="left:193px;top:782px;width:416px;height:351px;border-radius:54px"></div>
<div class="t" id="f58" style="left:-593px;width:2000px;text-align:center;top:790.2px;font-size:45.8px;color:#6a6a6a;font-family:'Liberation Serif',serif;transform:scaleX(0.9512);transform-origin:50% 0;"><span>Year</span></div>
<div class="a" style="left:198px;top:846px;width:406px;height:2px;background:#c4c4c4"></div>
<div class="yb" style="left:240px;top:862px;width:160px;height:127px"></div>
<div class="t" id="f59" style="left:-680px;width:2000px;text-align:center;top:914.5px;font-size:25.7px;color:#5a5a5a;transform:scaleX(0.9148);transform-origin:50% 0;"><span>2014</span></div>
<div class="yb" style="left:404px;top:862px;width:160px;height:127px"></div>
<div class="t" id="f60" style="left:-516px;width:2000px;text-align:center;top:914.5px;font-size:25.7px;color:#5a5a5a;transform:scaleX(0.9148);transform-origin:50% 0;"><span>2016</span></div>
<div class="yb" style="left:240px;top:998px;width:160px;height:127px"></div>
<div class="t" id="f61" style="left:-680px;width:2000px;text-align:center;top:1050.2px;font-size:25.7px;color:#5a5a5a;transform:scaleX(0.9148);transform-origin:50% 0;"><span>2015</span></div>
<div class="yb" style="left:404px;top:998px;width:160px;height:127px"></div>
<div class="t" id="f62" style="left:-516px;width:2000px;text-align:center;top:1050.2px;font-size:25.7px;color:#5a5a5a;transform:scaleX(0.9148);transform-origin:50% 0;"><span>2017</span></div>
<div class="slc" style="left:193px;top:1176px;width:416px;height:351px;border-radius:54px"></div>
<div class="t" id="f63" style="left:-593.5px;width:2000px;text-align:center;top:1182.0px;font-size:45.8px;color:#6a6a6a;font-family:'Liberation Serif',serif;transform:scaleX(0.9407);transform-origin:50% 0;"><span>Agent</span></div>
<div class="a" style="left:198px;top:1239px;width:406px;height:2px;background:#c4c4c4"></div>
<div class="yb" style="left:240px;top:1255px;width:161px;height:128px"></div>
<div class="t" id="f64" style="left:-679.5px;width:2000px;text-align:center;top:1290.2px;font-size:25.7px;color:#5a5a5a;transform:scaleX(0.9214);transform-origin:50% 0;"><span>Anna</span></div>
<div class="t" id="f65" style="left:-679.5px;width:2000px;text-align:center;top:1323.2px;font-size:25.7px;color:#5a5a5a;transform:scaleX(0.9461);transform-origin:50% 0;"><span>Andreadi</span></div>
<div class="yb" style="left:405px;top:1255px;width:161px;height:128px"></div>
<div class="t" id="f66" style="left:-514.5px;width:2000px;text-align:center;top:1290.2px;font-size:25.7px;color:#5a5a5a;transform:scaleX(0.9104);transform-origin:50% 0;"><span>Chuck</span></div>
<div class="t" id="f67" style="left:-514.5px;width:2000px;text-align:center;top:1323.2px;font-size:25.7px;color:#5a5a5a;transform:scaleX(0.9457);transform-origin:50% 0;"><span>Magee</span></div>
<div class="yb" style="left:240px;top:1391px;width:161px;height:128px"></div>
<div class="t" id="f68" style="left:-679.5px;width:2000px;text-align:center;top:1426.2px;font-size:25.7px;color:#5a5a5a;transform:scaleX(0.8797);transform-origin:50% 0;"><span>Cassandra</span></div>
<div class="t" id="f69" style="left:-679.5px;width:2000px;text-align:center;top:1459.2px;font-size:25.7px;color:#5a5a5a;transform:scaleX(0.9299);transform-origin:50% 0;"><span>Brandow</span></div>
<div class="yb" style="left:405px;top:1391px;width:161px;height:128px"></div>
<div class="t" id="f70" style="left:-514.5px;width:2000px;text-align:center;top:1426.2px;font-size:25.7px;color:#5a5a5a;transform:scaleX(0.9030);transform-origin:50% 0;"><span>Kelly</span></div>
<div class="t" id="f71" style="left:-514.5px;width:2000px;text-align:center;top:1459.2px;font-size:25.7px;color:#5a5a5a;transform:scaleX(0.9443);transform-origin:50% 0;"><span>Williams</span></div>
<div class="slc" style="left:192px;top:1592px;width:417px;height:193px;border-radius:60px"></div>
<div class="t" id="f72" style="left:-593px;width:2000px;text-align:center;top:1602.0px;font-size:45.8px;color:#6a6a6a;font-family:'Liberation Serif',serif;transform:scaleX(0.9494);transform-origin:50% 0;"><span>Client</span></div>
<div class="a" style="left:197px;top:1656px;width:407px;height:2px;background:#c4c4c4"></div>
<div class="a" style="left:208px;top:1679px;width:386px;height:51px;border:2px solid #2a2a2a;background:#f4f4f4"></div>
<div class="t" id="f73" style="left:220px;top:1693.2px;font-size:25.7px;color:#555555;transform:scaleX(0.9203);transform-origin:0 0;"><span>All</span></div>
<svg style="left:558px;top:1699px;" width="26" height="15" viewBox="0 0 26 15"><polyline points="1,1 13,13 25,1" fill="none" stroke="#555" stroke-width="2"/></svg>
<div class="card" style="left:707px;top:463px;width:417px;height:256px;border-radius:60px;"></div>
<div class="t" id="f74" style="left:-80.5px;width:2000px;text-align:center;top:493.4px;font-size:43.7px;color:#6e5b5b;font-family:'Liberation Serif',serif;transform:scaleX(0.9782);transform-origin:50% 0;"><span>Total Orders</span></div>
<div class="hl" style="left:711px;top:549px;width:409px;background:#b2b2b2"></div>
<div class="t" id="f75" style="left:-84.5px;width:2000px;text-align:center;top:599.2px;font-size:57px;color:#6e5b5b;font-weight:bold;transform:scaleX(0.9136);transform-origin:50% 0;"><span>5009</span></div>
<div class="card" style="left:1190px;top:463px;width:448px;height:256px;border-radius:60px;"></div>
<div class="t" id="f76" style="left:418.0px;width:2000px;text-align:center;top:493.4px;font-size:43.7px;color:#6e5b5b;font-family:'Liberation Serif',serif;transform:scaleX(0.9838);transform-origin:50% 0;"><span>Total Sales</span></div>
<div class="hl" style="left:1194px;top:549px;width:440px;background:#b2b2b2"></div>
<div class="t" id="f77" style="left:414.0px;width:2000px;text-align:center;top:599.2px;font-size:57px;color:#6e5b5b;font-weight:bold;transform:scaleX(0.9522);transform-origin:50% 0;"><span>2.30M</span></div>
<div class="card" style="left:1738px;top:463px;width:415px;height:256px;border-radius:60px;"></div>
<div class="t" id="f78" style="left:949.5px;width:2000px;text-align:center;top:493.7px;font-size:43.7px;color:#6e5b5b;font-family:'Liberation Serif',serif;transform:scaleX(0.9837);transform-origin:50% 0;"><span>Avg. Ship Days</span></div>
<div class="hl" style="left:1742px;top:549px;width:407px;background:#b2b2b2"></div>
<div class="t" id="f79" style="left:945.5px;width:2000px;text-align:center;top:598.9px;font-size:57px;color:#6e5b5b;font-weight:bold;transform:scaleX(0.9165);transform-origin:50% 0;"><span>40K</span></div>
<div class="card" style="left:2220px;top:463px;width:415px;height:256px;border-radius:60px;"></div>
<div class="t" id="f80" style="left:1431.5px;width:2000px;text-align:center;top:493.7px;font-size:43.7px;color:#6e5b5b;font-family:'Liberation Serif',serif;transform:scaleX(0.9797);transform-origin:50% 0;"><span>Total Returns</span></div>
<div class="hl" style="left:2224px;top:549px;width:407px;background:#b2b2b2"></div>
<div class="t" id="f81" style="left:1427.5px;width:2000px;text-align:center;top:598.9px;font-size:57px;color:#6e5b5b;font-weight:bold;transform:scaleX(0.9447);transform-origin:50% 0;"><span>296</span></div>
<div class="card" style="left:1609px;top:759px;width:414px;height:253px;border-radius:60px;"></div>
<div class="t" id="f82" style="left:820.0px;width:2000px;text-align:center;top:787.8px;font-size:40px;color:#6e5b5b;font-family:'Liberation Serif',serif;transform:scaleX(0.9472);transform-origin:50% 0;"><span>Number of Customer</span></div>
<div class="hl" style="left:1613px;top:838px;width:406px;background:#b2b2b2"></div>
<div class="t" id="f83" style="left:816.0px;width:2000px;text-align:center;top:890.0px;font-size:59px;color:#6e5b5b;font-weight:bold;transform:scaleX(0.9035);transform-origin:50% 0;"><span>793</span></div>
<div class="card" style="left:2218px;top:759px;width:415px;height:253px;border-radius:60px;"></div>
<div class="t" id="f84" style="left:1429.5px;width:2000px;text-align:center;top:788.7px;font-size:43.7px;color:#6e5b5b;font-family:'Liberation Serif',serif;transform:scaleX(0.9879);transform-origin:50% 0;"><span>Total Profit</span></div>
<div class="hl" style="left:2222px;top:844px;width:407px;background:#858585"></div>
<div class="t" id="f85" style="left:1425.5px;width:2000px;text-align:center;top:893.1px;font-size:59px;color:#6e5b5b;font-weight:bold;transform:scaleX(0.8829);transform-origin:50% 0;"><span>286.40K</span></div>
<div class="card" style="left:707px;top:760px;width:832px;height:574px;border-radius:60px;"></div>
<div class="t" id="f86" style="left:127.0px;width:2000px;text-align:center;top:794.7px;font-size:43.7px;color:#6e5b5b;font-family:'Liberation Serif',serif;transform:scaleX(0.9852);transform-origin:50% 0;"><span>Sales by Category</span></div>
<div class="hl" style="left:711px;top:847px;width:824px;background:#858585"></div>
<svg style="left:960px;top:870px;" width="280" height="400" viewBox="0 0 280 400"><line x1="8" y1="8" x2="8" y2="392" stroke="#c2b9be" stroke-width="2" stroke-dasharray="2,8"/><line x1="267" y1="8" x2="267" y2="392" stroke="#c2b9be" stroke-width="2" stroke-dasharray="2,8"/></svg>
<div class="a" style="left:968px;top:920px;width:434px;height:80px;background:#b3b3b3"></div>
<div class="a" style="left:968px;top:1027px;width:386px;height:80px;background:#b3b3b3"></div>
<div class="a" style="left:968px;top:1133px;width:374px;height:81px;background:#b3b3b3"></div>
<div class="t" id="f87" style="left:-1050px;width:2000px;text-align:right;top:949.3px;font-size:24.3px;color:#5f5f5f;transform:scaleX(0.9942);transform-origin:100% 0;"><span>Technology</span></div>
<div class="t" id="f88" style="left:-1050px;width:2000px;text-align:right;top:1056.4px;font-size:24.3px;color:#5f5f5f;transform:scaleX(0.9813);transform-origin:100% 0;"><span>Furniture</span></div>
<div class="t" id="f89" style="left:-1050px;width:2000px;text-align:right;top:1162.8px;font-size:24.3px;color:#5f5f5f;transform:scaleX(0.9744);transform-origin:100% 0;"><span>Office Supplies</span></div>
<div class="t" id="f90" style="left:1418px;top:949.3px;font-size:24.3px;color:#5f5f5f;transform:scaleX(0.9805);transform-origin:0 0;"><span>0.84M</span></div>
<div class="t" id="f91" style="left:1370px;top:1056.4px;font-size:24.3px;color:#5f5f5f;transform:scaleX(0.9805);transform-origin:0 0;"><span>0.74M</span></div>
<div class="t" id="f92" style="left:1358px;top:1162.8px;font-size:24.3px;color:#5f5f5f;transform:scaleX(0.9805);transform-origin:0 0;"><span>0.72M</span></div>
<div class="t" id="f93" style="left:-31px;width:2000px;text-align:center;top:1270.0px;font-size:24.3px;color:#5f5f5f;transform:scaleX(0.9630);transform-origin:50% 0;"><span>0.0M</span></div>
<div class="t" id="f94" style="left:228px;width:2000px;text-align:center;top:1270.0px;font-size:24.3px;color:#5f5f5f;transform:scaleX(0.9630);transform-origin:50% 0;"><span>0.5M</span></div>
<div class="t" style="left:735px;top:1119px;transform-origin:0 0;transform:rotate(-90deg) scaleX(.93);font-size:25px;font-weight:bold;color:#111"><span>Category</span></div>
<div class="card" style="left:1833px;top:1048px;width:576px;height:288px;border-radius:60px;"></div>
<div class="t" id="f95" style="left:1125.0px;width:2000px;text-align:center;top:1077.7px;font-size:43.7px;color:#6e5b5b;font-family:'Liberation Serif',serif;transform:scaleX(0.9829);transform-origin:50% 0;"><span>Total Profit</span></div>
<div class="hl" style="left:1837px;top:1134px;width:568px;background:#858585"></div>
<svg style="left:1833px;top:1048px;" width="576" height="288" viewBox="0 0 576 288"><path d="M188,259 A157,157 0 0 1 345,102 L345,149 A110,110 0 0 0 235,259 Z" fill="#b3b3b3"/><path d="M345,102 A157,157 0 0 1 502,259 L455,259 A110,110 0 0 0 345,149 Z" fill="#efefef"/><polyline points="178,238 186,258.5 235,258.5" fill="none" stroke="#4a4a4a" stroke-width="3.5"/></svg>
<div class="t" id="f96" style="left:1917px;top:1258.2px;font-size:33px;color:#595959;transform:scaleX(0.9145);transform-origin:0 0;"><span>24.90K</span></div>
<div class="t" id="f97" style="left:2120px;top:1253.4px;font-size:53px;color:#595959;transform:scaleX(0.8054);transform-origin:0 0;"><span>2.30M</span></div>
<svg style="left:2580px;top:1103px;" width="108" height="108" viewBox="0 0 108 108"><defs><linearGradient id="ag" x1="0" y1="0" x2="1" y2="0"><stop offset="0" stop-color="#84c8f4"/><stop offset="1" stop-color="#d68cf2"/></linearGradient></defs><rect x="6" y="6" width="96" height="96" rx="26" fill="none" stroke="url(#ag)" stroke-width="7"/><path d="M31,54 H76 M58,36 L76,54 L58,72" fill="none" stroke="url(#ag)" stroke-width="7" stroke-linecap="round" stroke-linejoin="round"/></svg>
<div class="card" style="left:642px;top:1368px;width:2057px;height:481px;border-radius:56px;border-color:#7b7b7b;background:#f6eff4;box-shadow:inset 0 10px 14px rgba(0,0,0,.05)"></div>
<div class="t" id="f98" style="left:677px;width:2000px;text-align:center;top:1398.0px;font-size:45.8px;color:#6e5b5b;font-family:'Liberation Serif',serif;transform:scaleX(0.9512);transform-origin:50% 0;"><span>Year</span></div>
<div class="a" style="left:670px;top:1453px;width:2002px;height:2px;background:#a9a3a6"></div>
<svg style="left:642px;top:1368px;" width="2057" height="481" viewBox="0 0 2057 481"><polygon points="123,380 123,313 235,302 350,253 464,221 579,319 691,300 805,264 920,218 1035,297 1148,259 1262,253 1377,171 1493,271 1605,262 1718,206 1833,134 1833,380" fill="#dcd5da"/><line x1="123.5" y1="118" x2="123.5" y2="380" stroke="#c2bcc0" stroke-width="2" stroke-dasharray="2,8"/><line x1="350" y1="118" x2="350" y2="380" stroke="#c2bcc0" stroke-width="2" stroke-dasharray="2,8"/><line x1="579" y1="118" x2="579" y2="380" stroke="#c2bcc0" stroke-width="2" stroke-dasharray="2,8"/><line x1="806" y1="118" x2="806" y2="380" stroke="#c2bcc0" stroke-width="2" stroke-dasharray="2,8"/><line x1="1036" y1="118" x2="1036" y2="380" stroke="#c2bcc0" stroke-width="2" stroke-dasharray="2,8"/><line x1="1263" y1="118" x2="1263" y2="380" stroke="#c2bcc0" stroke-width="2" stroke-dasharray="2,8"/><line x1="1493" y1="118" x2="1493" y2="380" stroke="#c2bcc0" stroke-width="2" stroke-dasharray="2,8"/><line x1="1719" y1="118" x2="1719" y2="380" stroke="#c2bcc0" stroke-width="2" stroke-dasharray="2,8"/><line x1="103" y1="204.29999999999995" x2="1850" y2="204.29999999999995" stroke="#c2bcc0" stroke-width="2" stroke-dasharray="2,8"/><line x1="103" y1="379.70000000000005" x2="1850" y2="379.70000000000005" stroke="#c2bcc0" stroke-width="2" stroke-dasharray="2,8"/><polyline points="123,313 235,302 350,253 464,221 579,319 691,300 805,264 920,218 1035,297 1148,259 1262,253 1377,171 1493,271 1605,262 1718,206 1833,134" fill="none" stroke="#b1b1b1" stroke-width="5.5" stroke-linejoin="round"/><circle cx="123" cy="313" r="6" fill="#b1b1b1"/><circle cx="235" cy="302" r="6" fill="#b1b1b1"/><circle cx="350" cy="253" r="6" fill="#b1b1b1"/><circle cx="464" cy="221" r="6" fill="#b1b1b1"/><circle cx="579" cy="319" r="6" fill="#b1b1b1"/><circle cx="691" cy="300" r="6" fill="#b1b1b1"/><circle cx="805" cy="264" r="6" fill="#b1b1b1"/><circle cx="920" cy="218" r="6" fill="#b1b1b1"/><circle cx="1035" cy="297" r="6" fill="#b1b1b1"/><circle cx="1148" cy="259" r="6" fill="#b1b1b1"/><circle cx="1262" cy="253" r="6" fill="#b1b1b1"/><circle cx="1377" cy="171" r="6" fill="#b1b1b1"/><circle cx="1493" cy="271" r="6" fill="#b1b1b1"/><circle cx="1605" cy="262" r="6" fill="#b1b1b1"/><circle cx="1718" cy="206" r="6" fill="#b1b1b1"/><circle cx="1833" cy="134" r="6" fill="#b1b1b1"/></svg>
<div class="t" id="f99" style="left:672px;top:1559.7px;font-size:23.6px;color:#5f5f5f;transform:scaleX(0.9872);transform-origin:0 0;"><span>0.2M</span></div>
<div class="t" id="f100" style="left:672px;top:1735.1px;font-size:23.6px;color:#5f5f5f;transform:scaleX(0.9872);transform-origin:0 0;"><span>0.0M</span></div>
<div class="t" id="f101" style="left:-234.5px;width:2000px;text-align:center;top:1758.5px;font-size:23.6px;color:#5f5f5f;transform:scaleX(0.9659);transform-origin:50% 0;"><span>Jan 2014</span></div>
<div class="t" id="f102" style="left:-8px;width:2000px;text-align:center;top:1758.5px;font-size:23.6px;color:#5f5f5f;transform:scaleX(0.9773);transform-origin:50% 0;"><span>Jul 2014</span></div>
<div class="t" id="f103" style="left:221px;width:2000px;text-align:center;top:1758.5px;font-size:23.6px;color:#5f5f5f;transform:scaleX(0.9597);transform-origin:50% 0;"><span>Jan 2015</span></div>
<div class="t" id="f104" style="left:448px;width:2000px;text-align:center;top:1758.5px;font-size:23.6px;color:#5f5f5f;transform:scaleX(0.9661);transform-origin:50% 0;"><span>Jul 2015</span></div>
<div class="t" id="f105" style="left:678px;width:2000px;text-align:center;top:1758.5px;font-size:23.6px;color:#5f5f5f;transform:scaleX(0.9597);transform-origin:50% 0;"><span>Jan 2016</span></div>
<div class="t" id="f106" style="left:905px;width:2000px;text-align:center;top:1758.5px;font-size:23.6px;color:#5f5f5f;transform:scaleX(0.9773);transform-origin:50% 0;"><span>Jul 2016</span></div>
<div class="t" id="f107" style="left:1135px;width:2000px;text-align:center;top:1758.5px;font-size:23.6px;color:#5f5f5f;transform:scaleX(0.9597);transform-origin:50% 0;"><span>Jan 2017</span></div>
<div class="t" id="f108" style="left:1361px;width:2000px;text-align:center;top:1758.5px;font-size:23.6px;color:#5f5f5f;transform:scaleX(0.9773);transform-origin:50% 0;"><span>Jul 2017</span></div>
<div class="t" id="f109" style="left:696px;width:2000px;text-align:center;top:1794.9px;font-size:26px;color:#111111;font-weight:bold;transform:scaleX(0.8607);transform-origin:50% 0;"><span>Year</span></div>
<div class="t" id="f110" style="left:745px;top:1702.5px;font-size:23.6px;color:#5f5f5f;transform:scaleX(0.9939);transform-origin:0 0;"><span>0.07M</span></div>
<div class="t" id="f111" style="left:958px;top:1575.4px;font-size:23.6px;color:#5f5f5f;transform:scaleX(0.9939);transform-origin:0 0;"><span>0.14M</span></div>
<div class="t" id="f112" style="left:1073px;top:1543.4px;font-size:23.6px;color:#5f5f5f;transform:scaleX(0.9939);transform-origin:0 0;"><span>0.18M</span></div>
<div class="t" id="f113" style="left:1188px;top:1707.4px;font-size:23.6px;color:#5f5f5f;transform:scaleX(0.9939);transform-origin:0 0;"><span>0.07M</span></div>
<div class="t" id="f114" style="left:1414px;top:1587.4px;font-size:23.6px;color:#5f5f5f;transform:scaleX(0.9939);transform-origin:0 0;"><span>0.13M</span></div>
<div class="t" id="f115" style="left:1529px;top:1541.4px;font-size:23.6px;color:#5f5f5f;transform:scaleX(0.9939);transform-origin:0 0;"><span>0.18M</span></div>
<div class="t" id="f116" style="left:1644px;top:1686.4px;font-size:23.6px;color:#5f5f5f;transform:scaleX(0.9939);transform-origin:0 0;"><span>0.09M</span></div>
<div class="t" id="f117" style="left:1986px;top:1495.4px;font-size:23.6px;color:#5f5f5f;transform:scaleX(0.9939);transform-origin:0 0;"><span>0.24M</span></div>
<div class="t" id="f118" style="left:2102px;top:1661.4px;font-size:23.6px;color:#5f5f5f;transform:scaleX(0.9939);transform-origin:0 0;"><span>0.12M</span></div>
<div class="t" id="f119" style="left:2429px;top:1480.4px;font-size:23.6px;color:#5f5f5f;transform:scaleX(0.9939);transform-origin:0 0;"><span>0.28M</span></div>
<div class="t" id="f120" style="left:2506px;top:1487.4px;font-size:23.6px;color:#5f5f5f;transform:scaleX(0.9704);transform-origin:0 0;"><span>Sum of Sales</span></div>
<div class="a" style="left:2855px;top:425px;width:82px;height:1467px;background:#ffffff;border-left:2px solid #bdbdbd"></div>
<svg style="left:2887px;top:463px;" width="22" height="20" viewBox="0 0 22 20"><path d="M10,1 L2,10 L10,19 M19,1 L11,10 L19,19" fill="none" stroke="#333" stroke-width="2.5"/></svg>
<svg style="left:2893px;top:531px;" width="20" height="24" viewBox="0 0 20 24"><path d="M16,2 V22 M9,8 V18 M2,14 V16" stroke="#444" stroke-width="3"/></svg>
<div class="t" id="filt" style="left:2915px;top:575px;transform-origin:0 0;transform:rotate(90deg) scaleX(.93);font-size:40px;color:#222"><span>Filters</span></div>
<div class="a" style="left:2937px;top:425px;width:452px;height:1555px;background:#141414;border-left:2px solid #555"></div>
<div class="t" id="f121" style="left:2958px;top:453.8px;font-size:40px;color:#ffffff;font-weight:bold;transform:scaleX(0.9323);transform-origin:0 0;"><span>Visualizations</span></div>
<svg style="left:3342px;top:463px;" width="22" height="20" viewBox="0 0 22 20"><path d="M2,1 L10,10 L2,19 M11,1 L19,10 L11,19" fill="none" stroke="#fff" stroke-width="2.5"/></svg>
<div class="t" id="f122" style="left:2960px;top:525.0px;font-size:29px;color:#ffffff;font-weight:bold;transform:scaleX(0.9366);transform-origin:0 0;"><span>Build visual</span></div>
<div class="a" style="left:2958px;top:568px;width:80px;height:80px;background:#292929;border-radius:5px"></div>
<svg style="left:2966px;top:576px;" width="64" height="64" viewBox="0 0 64 64"><line x1="2" y1="3" x2="50" y2="3" stroke="#aaa" stroke-width="2.5"/><rect x="2" y="13" width="59" height="19" fill="#2bb09a" stroke="#aaa" stroke-width="2" stroke-dasharray="3,2"/><rect x="2" y="40" width="59" height="19" fill="#2bb09a" stroke="#aaa" stroke-width="2" stroke-dasharray="3,2"/></svg>
<svg style="left:3131px;top:577px;" width="64" height="64" viewBox="0 0 64 64"><path d="M26,58 H3 V2 H28 L44,18 V30" fill="none" stroke="#bbb" stroke-width="2.5"/><path d="M27,2 V18 H44" fill="#eee" stroke="#bbb" stroke-width="2"/><path d="M60,22 C52,30 44,38 36,46 C30,44 26,50 24,58 C32,60 40,56 38,48 Z" fill="none" stroke="#bbb" stroke-width="2.5"/></svg>
<svg style="left:2939px;top:657px" width="450" height="26"><path d="M0,22 H38 L59,3 L80,22 H450" fill="none" stroke="#6a6a6a" stroke-width="2.5"/></svg>
<svg style="left:2966px;top:708px;" width="48" height="48" viewBox="0 0 48 48"><path d="M2,1 V45 H46" fill="none" stroke="#cfcfcf" stroke-width="2.5"/><rect x="11" y="7" width="19" height="10" fill="#0f5fb3" stroke="#64b0ee" stroke-width="1.5"/><rect x="11" y="27" width="30" height="11" fill="#777" stroke="#999" stroke-width="1.5"/><path d="M2,17 H11 M2,38 H11" stroke="#cfcfcf" stroke-width="2"/></svg>
<svg style="left:3036px;top:708px;" width="48" height="48" viewBox="0 0 48 48"><path d="M2,1 V45 H46" fill="none" stroke="#cfcfcf" stroke-width="2.5"/><rect x="9" y="15" width="10" height="27" fill="#0f5fb3" stroke="#64b0ee" stroke-width="1.5"/><rect x="29" y="5" width="10" height="37" fill="#777" stroke="#999" stroke-width="1.5"/><path d="M19,42 V28 M39,42 V20" stroke="#cfcfcf" stroke-width="2"/></svg>
<svg style="left:3105px;top:708px;" width="48" height="48" viewBox="0 0 48 48"><path d="M2,1 V45 H46" fill="none" stroke="#cfcfcf" stroke-width="2.5"/><rect x="3" y="3" width="40" height="9" fill="#0f5fb3" stroke="#64b0ee" stroke-width="1.5"/><rect x="3" y="20" width="16" height="9" fill="#777"/><path d="M2,29 H33 V38 H2" fill="none" stroke="#cfcfcf" stroke-width="2"/></svg>
<svg style="left:3175px;top:708px;" width="48" height="48" viewBox="0 0 48 48"><path d="M2,1 V45 H46" fill="none" stroke="#cfcfcf" stroke-width="2.5"/><rect x="5" y="2" width="9" height="42" fill="#0f5fb3" stroke="#64b0ee" stroke-width="1.5"/><rect x="26" y="26" width="8" height="18" fill="#777"/><path d="M14,44 V20 H22 V44 M36,44 V14 H44 V44" fill="none" stroke="#cfcfcf" stroke-width="2"/></svg>
<svg style="left:3245px;top:708px;" width="48" height="48" viewBox="0 0 48 48"><path d="M2,1 V45 H46" fill="none" stroke="#cfcfcf" stroke-width="2.5"/><rect x="10" y="6" width="30" height="10" fill="#0f5fb3" stroke="#64b0ee" stroke-width="1.5"/><rect x="28" y="27" width="13" height="10" fill="#777" stroke="#999" stroke-width="1.5"/><path d="M2,16 H10 M2,37 H28" stroke="#cfcfcf" stroke-width="2"/></svg>
<svg style="left:3315px;top:708px;" width="48" height="48" viewBox="0 0 48 48"><path d="M2,1 V45 H46" fill="none" stroke="#cfcfcf" stroke-width="2.5"/><rect x="8" y="5" width="10" height="28" fill="#0f5fb3" stroke="#64b0ee" stroke-width="1.5"/><rect x="29" y="5" width="10" height="13" fill="#777" stroke="#999" stroke-width="1.5"/><path d="M8,33 V44 M18,33 V44 M29,18 V44 M39,18 V44" stroke="#cfcfcf" stroke-width="2"/></svg>
<svg style="left:2966px;top:778px;" width="48" height="48" viewBox="0 0 48 48"><path d="M2,1 V45 H46" fill="none" stroke="#cfcfcf" stroke-width="2.5"/><path d="M2,28 L18,14 L30,24 L44,12" fill="none" stroke="#cfcfcf" stroke-width="2"/><path d="M2,36 L20,20 L30,30 L44,18" fill="none" stroke="#64b0ee" stroke-width="2"/></svg>
<svg style="left:3036px;top:778px;" width="48" height="48" viewBox="0 0 48 48"><path d="M1,45 H46" stroke="#cfcfcf" stroke-width="2.5"/><path d="M2,45 L18,3 L30,28" fill="none" stroke="#cfcfcf" stroke-width="2"/><path d="M30,28 L40,3 L46,20 V45 Z" fill="#777" stroke="#999" stroke-width="1.5"/><path d="M2,45 L14,26 L24,34 L34,22 L46,45 Z" fill="#0f5fb3" stroke="#64b0ee" stroke-width="1.5"/></svg>
<svg style="left:3105px;top:778px;" width="48" height="48" viewBox="0 0 48 48"><path d="M2,1 V45 H46" fill="none" stroke="#cfcfcf" stroke-width="2.5"/><path d="M2,20 L14,6 L24,22 L34,6 L46,18 V28 L34,18 L24,34 L14,18 L2,30 Z" fill="#0f5fb3" stroke="#64b0ee" stroke-width="1.5"/></svg>
<svg style="left:3175px;top:778px;" width="48" height="48" viewBox="0 0 48 48"><path d="M2,1 V45 H46" fill="none" stroke="#cfcfcf" stroke-width="2.5"/><path d="M2,6 H46 V34 L34,20 L24,34 L12,20 L2,30 Z" fill="#0f5fb3" stroke="#64b0ee" stroke-width="1.5"/></svg>
<svg style="left:3245px;top:778px;" width="48" height="48" viewBox="0 0 48 48"><path d="M2,1 V45 H46" fill="none" stroke="#cfcfcf" stroke-width="2.5"/><rect x="9" y="7" width="9" height="30" fill="#0f5fb3" stroke="#64b0ee" stroke-width="1.5"/><rect x="29" y="7" width="9" height="14" fill="#777" stroke="#999" stroke-width="1.5"/><path d="M2,40 L14,28 L26,38 L44,18" fill="none" stroke="#cfcfcf" stroke-width="2"/></svg>
<svg style="left:3315px;top:778px;" width="48" height="48" viewBox="0 0 48 48"><path d="M2,1 V45 H46" fill="none" stroke="#cfcfcf" stroke-width="2.5"/><rect x="8" y="25" width="10" height="19" fill="#0f5fb3"/><rect x="30" y="14" width="10" height="30" fill="#777"/><path d="M20,44 V4 H30 V44" fill="none" stroke="#cfcfcf" stroke-width="2"/><path d="M2,40 L14,28 L26,38 L44,18" fill="none" stroke="#cfcfcf" stroke-width="2"/></svg>
<svg style="left:2966px;top:848px;" width="48" height="48" viewBox="0 0 48 48"><path d="M2,1 V45 H46" fill="none" stroke="#cfcfcf" stroke-width="2.5"/><path d="M6,6 C16,12 30,12 42,6 V16 C30,22 16,22 6,16 Z" fill="#777"/><path d="M6,20 C16,34 30,34 42,20 V28 C30,40 16,40 6,28 Z" fill="#64b0ee" stroke="#0f5fb3" stroke-width="2"/><rect x="8" y="30" width="8" height="6" fill="#e58a1a"/><rect x="30" y="30" width="8" height="6" fill="#e58a1a"/></svg>
<svg style="left:3036px;top:848px;" width="48" height="48" viewBox="0 0 48 48"><path d="M2,45 H46" stroke="#cfcfcf" stroke-width="2.5"/><path d="M3,44 V12 H12 V44 M12,44 V24 H20 V12 H30 V2 H38 V44 M38,44 H30" fill="none" stroke="#cfcfcf" stroke-width="2"/><rect x="20" y="24" width="8" height="10" fill="#777"/></svg>
<svg style="left:3105px;top:848px;" width="48" height="48" viewBox="0 0 48 48"><rect x="2" y="2" width="44" height="12" fill="#0f5fb3" stroke="#64b0ee" stroke-width="1.5"/><rect x="9" y="17" width="30" height="11" fill="#0f5fb3" stroke="#64b0ee" stroke-width="1.5"/><rect x="15" y="31" width="18" height="12" fill="#0f5fb3" stroke="#64b0ee" stroke-width="1.5"/></svg>
<svg style="left:3175px;top:848px;" width="48" height="48" viewBox="0 0 48 48"><path d="M2,1 V45 H46" fill="none" stroke="#cfcfcf" stroke-width="2.5"/><rect x="8" y="11" width="6" height="6" fill="#0f5fb3"/><rect x="22" y="19" width="6" height="6" fill="#0f5fb3"/><rect x="34" y="27" width="6" height="6" fill="#0f5fb3"/><rect x="36" y="3" width="6" height="6" fill="#cfcfcf"/><rect x="8" y="35" width="6" height="6" fill="#cfcfcf"/></svg>
<svg style="left:3245px;top:848px;" width="48" height="48" viewBox="0 0 48 48"><circle cx="24" cy="23" r="21" fill="none" stroke="#cfcfcf" stroke-width="2.5"/><path d="M24,2 A21,21 0 0 1 38,39 L24,23 Z" fill="#0f5fb3" stroke="#64b0ee" stroke-width="1.5"/></svg>
<svg style="left:3315px;top:848px;" width="48" height="48" viewBox="0 0 48 48"><circle cx="24" cy="23" r="17" fill="none" stroke="#0f5fb3" stroke-width="9"/><path d="M24,6 A17,17 0 0 0 7,23" fill="none" stroke="#666" stroke-width="9"/></svg>
<svg style="left:2966px;top:918px;" width="48" height="48" viewBox="0 0 48 48"><rect x="2" y="2" width="44" height="43" fill="none" stroke="#cfcfcf" stroke-width="2.5"/><rect x="2" y="2" width="17" height="43" fill="#0f5fb3" stroke="#64b0ee" stroke-width="1.5"/><path d="M19,22 H46 M32,22 V45 M19,12 H46" stroke="#cfcfcf" stroke-width="2"/></svg>
<svg style="left:3036px;top:918px;" width="48" height="48" viewBox="0 0 48 48"><circle cx="24" cy="20" r="13" fill="#1a1a1a" stroke="#cfcfcf" stroke-width="2"/><path d="M16,14 L24,10 L30,18 L26,26 L20,22Z" fill="#2ea043"/><path d="M10,8 C2,18 6,34 24,36 V44 M14,44 H34" fill="none" stroke="#cfcfcf" stroke-width="2"/></svg>
<svg style="left:3105px;top:918px;" width="48" height="48" viewBox="0 0 48 48"><path d="M6,4 H20 L22,10 H40 L42,22 L38,38 L28,44 L18,40 L8,38 L4,26 Z" fill="#777" stroke="#cfcfcf" stroke-width="2"/><path d="M22,22 H42 L38,38 L28,44 L22,40 Z" fill="#0f5fb3" stroke="#64b0ee" stroke-width="1.5"/><path d="M6,4 H20 L22,10 V22 L8,24 Z" fill="#0f5fb3" stroke="#64b0ee" stroke-width="1.5"/></svg>
<svg style="left:3175px;top:918px;" width="48" height="48" viewBox="0 0 48 48"><path d="M28,1 L40,46 L26,34 L10,40 Z" fill="#64b0ee" stroke="#0f5fb3" stroke-width="1"/></svg>
<svg style="left:3245px;top:918px;" width="48" height="48" viewBox="0 0 48 48"><path d="M3,34 A21,21 0 0 1 45,34" fill="none" stroke="#64b0ee" stroke-width="7"/><path d="M3,34 H45" stroke="#cfcfcf" stroke-width="2"/><path d="M20,34 L32,22" stroke="#cfcfcf" stroke-width="4"/></svg>
<svg style="left:3315px;top:918px;" width="48" height="48" viewBox="0 0 48 48"><rect x="2" y="6" width="44" height="36" fill="none" stroke="#cfcfcf" stroke-width="2.5"/><text x="6" y="30" font-family="Liberation Sans" font-size="19" fill="#64b0ee">123</text><path d="M7,35 H41" stroke="#cfcfcf" stroke-width="2"/></svg>
<svg style="left:2966px;top:988px;" width="48" height="48" viewBox="0 0 48 48"><rect x="2" y="2" width="44" height="43" fill="none" stroke="#cfcfcf" stroke-width="2.5"/><path d="M12,10 H38 M14,18 H38 M12,26 H38 M14,34 H30" stroke="#64b0ee" stroke-width="3"/><path d="M8,8 V38" stroke="#cfcfcf" stroke-width="2"/></svg>
<svg style="left:3036px;top:988px;" width="48" height="48" viewBox="0 0 48 48"><rect x="2" y="3" width="44" height="38" fill="none" stroke="#cfcfcf" stroke-width="2.5"/><path d="M6,28 L14,16 L22,28Z" fill="#2ea043"/><path d="M24,16 L32,28 L40,16Z" fill="#e5484d"/><path d="M6,34 H42" stroke="#cfcfcf" stroke-width="2"/></svg>
<svg style="left:3105px;top:988px;" width="48" height="48" viewBox="0 0 48 48"><rect x="2" y="2" width="44" height="43" fill="none" stroke="#cfcfcf" stroke-width="2.5"/><path d="M2,9 H46" stroke="#cfcfcf" stroke-width="3"/><rect x="8" y="16" width="8" height="8" fill="#777"/><rect x="8" y="30" width="8" height="8" fill="#777"/><path d="M24,26 H48 L40,36 V46 L34,42 V36Z" fill="#141414" stroke="#cfcfcf" stroke-width="2.5"/></svg>
<svg style="left:3175px;top:988px;" width="48" height="48" viewBox="0 0 48 48"><rect x="2" y="2" width="44" height="43" fill="none" stroke="#cfcfcf" stroke-width="2.5"/><path d="M2,9 H46" stroke="#777" stroke-width="4"/><path d="M2,22 H46 M2,34 H46 M16,9 V45 M31,9 V45" stroke="#cfcfcf" stroke-width="2"/></svg>
<svg style="left:3245px;top:988px;" width="48" height="48" viewBox="0 0 48 48"><rect x="2" y="2" width="44" height="43" fill="none" stroke="#cfcfcf" stroke-width="2.5"/><path d="M2,9 H46" stroke="#777" stroke-width="4"/><rect x="2" y="22" width="44" height="23" fill="#0f5fb3"/><rect x="31" y="9" width="15" height="13" fill="#0f5fb3"/><path d="M2,22 H46 M2,34 H46 M16,9 V45 M31,9 V45" stroke="#cfcfcf" stroke-width="2"/></svg>
<svg style="left:3315px;top:988px;" width="48" height="48" viewBox="0 0 48 48"><text x="8" y="38" font-family="Liberation Sans" font-weight="bold" font-size="38" fill="#64b0ee">R</text></svg>
<svg style="left:2966px;top:1057px;" width="48" height="48" viewBox="0 0 48 48"><text x="-2" y="36" font-family="Liberation Sans" font-weight="bold" font-size="36" fill="#64b0ee" letter-spacing="-2">Py</text></svg>
<svg style="left:3036px;top:1057px;" width="48" height="48" viewBox="0 0 48 48"><path d="M2,1 V45 H46" fill="none" stroke="#cfcfcf" stroke-width="2.5"/><path d="M2,10 H34 M2,22 H22 M2,33 H16" stroke="#cfcfcf" stroke-width="2"/><circle cx="36" cy="9" r="5" fill="#64b0ee"/><circle cx="24" cy="21" r="4" fill="#777"/><circle cx="17" cy="32" r="4" fill="#777"/></svg>
<svg style="left:3105px;top:1057px;" width="48" height="48" viewBox="0 0 48 48"><rect x="2" y="18" width="14" height="11" fill="#64b0ee" stroke="#0f5fb3" stroke-width="1.5"/><rect x="28" y="2" width="18" height="11" fill="#64b0ee" stroke="#0f5fb3" stroke-width="1.5"/><rect x="28" y="18" width="18" height="11" fill="#64b0ee" stroke="#0f5fb3" stroke-width="1.5"/><rect x="28" y="34" width="18" height="11" fill="#64b0ee" stroke="#0f5fb3" stroke-width="1.5"/><path d="M16,23 H28 M22,8 V40 M22,8 H28 M22,40 H28" fill="none" stroke="#64b0ee" stroke-width="2"/></svg>
<svg style="left:3175px;top:1057px;" width="48" height="48" viewBox="0 0 48 48"><path d="M2,3 H46 V34 H16 L8,44 V34 H2 Z" fill="none" stroke="#64b0ee" stroke-width="2.5"/></svg>
<svg style="left:3245px;top:1057px;" width="48" height="48" viewBox="0 0 48 48"><path d="M6,45 V2 H30 L42,14 V45 Z" fill="none" stroke="#cfcfcf" stroke-width="2.5"/><circle cx="13" cy="22" r="3" fill="#64b0ee"/><path d="M20,22 H34 M16,30 H32" stroke="#64b0ee" stroke-width="2"/></svg>
<svg style="left:3315px;top:1057px;" width="48" height="48" viewBox="0 0 48 48"><path d="M10,3 H38 V18 C38,28 30,32 24,32 C18,32 10,28 10,18Z" fill="none" stroke="#cfcfcf" stroke-width="2.5"/><path d="M10,8 H3 V14 C3,20 8,22 10,22 M38,8 H45 V14 C45,20 40,22 38,22" fill="none" stroke="#cfcfcf" stroke-width="2"/><rect x="10" y="3" width="28" height="6" fill="#64b0ee"/><path d="M24,32 V38 M14,44 H34 L30,38 H18Z" fill="#64b0ee" stroke="#64b0ee" stroke-width="2"/></svg>
<svg style="left:2966px;top:1127px;" width="48" height="48" viewBox="0 0 48 48"><path d="M4,45 V2 H30 L42,14 V45 Z" fill="none" stroke="#cfcfcf" stroke-width="2.5"/><rect x="10" y="32" width="6" height="10" fill="#cfcfcf"/><rect x="19" y="26" width="6" height="16" fill="#cfcfcf"/><rect x="28" y="20" width="6" height="22" fill="#cfcfcf"/></svg>
<svg style="left:3036px;top:1127px;" width="48" height="48" viewBox="0 0 48 48"><rect x="4" y="8" width="42" height="34" fill="none" stroke="#cfcfcf" stroke-width="2.5"/><text x="12" y="34" font-family="Liberation Sans" font-size="18" fill="#64b0ee">123</text><path d="M14,2 L4,22 H12 L6,36 L22,14 H14 L20,2Z" fill="#f0b030" stroke="#141414" stroke-width="1.5"/></svg>
<svg style="left:3105px;top:1127px;" width="48" height="48" viewBox="0 0 48 48"><rect x="26" y="6" width="16" height="16" fill="none" stroke="#777" stroke-width="2.5"/><rect x="6" y="28" width="16" height="16" fill="none" stroke="#777" stroke-width="2.5"/><path d="M24,26 H48 L40,36 V46 L34,42 V36Z" fill="#141414" stroke="#cfcfcf" stroke-width="2.5"/><path d="M14,2 L4,22 H12 L6,36 L22,14 H14 L20,2Z" fill="#f0b030" stroke="#141414" stroke-width="1.5"/></svg>
<svg style="left:3175px;top:1127px;" width="48" height="48" viewBox="0 0 48 48"><path d="M14,10 H44 V44 H4 V26" fill="none" stroke="#64b0ee" stroke-width="3"/><path d="M18,26 C26,18 30,28 36,20 L40,34 C30,30 26,40 18,38Z" fill="#0f5fb3"/><path d="M10,2 A8,8 0 0 1 18,10 C18,16 10,22 10,22 C10,22 2,16 2,10 A8,8 0 0 1 10,2Z" fill="#e58a1a"/><circle cx="38" cy="40" r="6" fill="#e58a1a"/><circle cx="46" cy="30" r="3" fill="#e58a1a"/></svg>
<svg style="left:3245px;top:1127px;" width="48" height="48" viewBox="0 0 48 48"><path d="M18,6 L32,20 L18,34 L4,20 Z M30,14 L44,28 L30,42 L16,28 Z" fill="none" stroke="#9b3fb5" stroke-width="2.5" stroke-linejoin="round"/></svg>
<svg style="left:3315px;top:1127px;" width="48" height="48" viewBox="0 0 48 48"><path d="M2,4 H30 L46,22 L30,42 H2 L18,22 Z M14,42 L30,22 L22,12" fill="none" stroke="#64b0ee" stroke-width="2.5"/></svg>
<div class="t" style="left:2974px;top:1196px;font-size:32px;color:#fff;font-weight:bold;letter-spacing:2px">...</div>
<div class="a" style="left:2939px;top:1266px;width:450px;height:2px;background:#bdbdbd"></div>
<div class="t" id="f123" style="left:2968px;top:1295.2px;font-size:29.5px;color:#ffffff;transform:scaleX(0.9598);transform-origin:0 0;"><span>Values</span></div>
<div class="a" style="left:2948px;top:1343px;width:424px;height:69px;border:2px dashed #8a8a8a;border-radius:5px"></div>
<div class="t" id="f124" style="left:2975px;top:1363.5px;font-size:30px;color:#ffffff;transform:scaleX(0.9987);transform-origin:0 0;"><span>Add data fields here</span></div>
<div class="t" id="f125" style="left:2968px;top:1444.9px;font-size:30px;color:#ffffff;font-weight:bold;transform:scaleX(0.9695);transform-origin:0 0;"><span>Drill through</span></div>
<div class="t" id="f126" style="left:2968px;top:1506.9px;font-size:30px;color:#ffffff;transform:scaleX(1.0048);transform-origin:0 0;"><span>Cross-report</span></div>
<div class="t" id="f127" style="left:2968px;top:1573.2px;font-size:30px;color:#ffffff;transform:scaleX(0.9897);transform-origin:0 0;"><span>Keep all filters</span></div>
<div class="a" style="left:3253px;top:1502px;width:79px;height:39px;border:2px solid #bcbcbc;border-radius:20px"></div>
<div class="a" style="left:3265px;top:1511.5px;width:20px;height:20px;background:#b0b0b0;border-radius:50%"></div>
<div class="t" id="f128" style="left:3290px;top:1509.5px;font-size:23px;color:#bcbcbc;transform:scaleX(1.0623);transform-origin:0 0;"><span>Off</span></div>
<div class="a" style="left:3253px;top:1570px;width:79px;height:39px;border:2px solid #bcbcbc;border-radius:20px"></div>
<div class="a" style="left:3265px;top:1579.5px;width:20px;height:20px;background:#b0b0b0;border-radius:50%"></div>
<div class="t" id="f129" style="left:3290px;top:1577.5px;font-size:23px;color:#bcbcbc;transform:scaleX(1.0623);transform-origin:0 0;"><span>Off</span></div>
<div class="a" style="left:2949px;top:1634px;width:423px;height:63px;border:2px dashed #8a8a8a;border-radius:5px;background:#000"></div>
<div class="t" id="f130" style="left:2970px;top:1652.6px;font-size:30px;color:#ffffff;transform:scaleX(1.0290);transform-origin:0 0;"><span>Add drill-through fields here</span></div>
<div class="a" style="left:3389px;top:425px;width:451px;height:1555px;background:#141414;border-left:2px solid #5a5a5a"></div>
<div class="t" id="f131" style="left:3412px;top:453.8px;font-size:40px;color:#ffffff;font-weight:bold;transform:scaleX(0.9688);transform-origin:0 0;"><span>Data</span></div>
<svg style="left:3794px;top:463px;" width="22" height="20" viewBox="0 0 22 20"><path d="M2,1 L10,10 L2,19 M11,1 L19,10 L11,19" fill="none" stroke="#fff" stroke-width="2.5"/></svg>
<div class="a" style="left:3401px;top:539px;width:428px;height:58px;border:2px solid #6e6e6e;border-radius:8px;background:#232323"></div>
<svg style="left:3431px;top:550px;" width="38" height="38" viewBox="0 0 38 38"><circle cx="15" cy="15" r="12" fill="none" stroke="#bbb" stroke-width="2.5"/><line x1="24" y1="24" x2="35" y2="35" stroke="#bbb" stroke-width="2.5"/></svg>
<div class="t" id="f132" style="left:3485px;top:553.2px;font-size:33px;color:#a4a4a4;transform:scaleX(0.9817);transform-origin:0 0;"><span>Search</span></div>
<div class="a" style="left:3810px;top:618px;width:20px;height:880px;background:#8c8782"></div>
<svg style="left:3426px;top:644px;" width="22" height="15" viewBox="0 0 22 15"><polyline points="2,2 11,12 20,2" fill="none" stroke="#eee" stroke-width="2.5"/></svg>
<svg style="left:3462px;top:636px;" width="32" height="31" viewBox="0 0 32 31"><rect x="2" y="2" width="28" height="27" rx="6" fill="none" stroke="#eee" stroke-width="2.5"/><path d="M2,11 H30 M2,20 H30 M11,2 V29 M21,2 V29" stroke="#eee" stroke-width="2.5"/></svg>
<div class="t" id="f133" style="left:3508px;top:637.8px;font-size:29.6px;color:#ffffff;transform:scaleX(0.9892);transform-origin:0 0;"><span>Orders</span></div>
<div class="a" style="left:3500px;top:696px;width:30px;height:30px;border:2px solid #a8a8a8;border-radius:5px"></div>
<div class="t" id="f134" style="left:3595.6px;top:697.9px;font-size:30px;color:#ffffff;transform:scaleX(0.9899);transform-origin:0 0;"><span>Category</span></div>
<div class="a" style="left:3500px;top:756px;width:30px;height:30px;border:2px solid #a8a8a8;border-radius:5px"></div>
<div class="t" id="f135" style="left:3595.6px;top:757.9px;font-size:30px;color:#ffffff;transform:scaleX(0.9967);transform-origin:0 0;"><span>City</span></div>
<div class="a" style="left:3500px;top:816px;width:30px;height:30px;border:2px solid #a8a8a8;border-radius:5px"></div>
<div class="t" id="f136" style="left:3595.6px;top:817.9px;font-size:30px;color:#ffffff;transform:scaleX(1.0043);transform-origin:0 0;"><span>Country</span></div>
<div class="a" style="left:3500px;top:876px;width:30px;height:30px;border:2px solid #a8a8a8;border-radius:5px"></div>
<div class="t" id="f137" style="left:3595.6px;top:877.9px;font-size:30px;color:#ffffff;transform:scaleX(0.9829);transform-origin:0 0;"><span>Customer ID</span></div>
<div class="a" style="left:3500px;top:936px;width:30px;height:30px;border:2px solid #a8a8a8;border-radius:5px"></div>
<div class="t" id="f138" style="left:3595.6px;top:937.9px;font-size:30px;color:#ffffff;transform:scaleX(0.9691);transform-origin:0 0;"><span>Customer Na...</span></div>
<div class="a" style="left:3500px;top:996px;width:30px;height:30px;border:2px solid #a8a8a8;border-radius:5px"></div>
<div class="t" id="f139" style="left:3595.6px;top:997.9px;font-size:30px;color:#ffffff;transform:scaleX(1.0067);transform-origin:0 0;"><span>Discount</span></div>
<svg style="left:3550px;top:995px;" width="30" height="32" viewBox="0 0 30 32"><path d="M26,3 H4 L15,16 L4,29 H27" fill="none" stroke="#eee" stroke-width="2.5"/></svg>
<div class="a" style="left:3500px;top:1056px;width:30px;height:30px;border:2px solid #a8a8a8;border-radius:5px"></div>
<div class="t" id="f140" style="left:3595.6px;top:1057.9px;font-size:30px;color:#ffffff;transform:scaleX(0.9940);transform-origin:0 0;"><span>Order Date</span></div>
<svg style="left:3550px;top:1056px;" width="30" height="31" viewBox="0 0 30 31"><rect x="2" y="2" width="26" height="27" rx="5" fill="none" stroke="#eee" stroke-width="2.5"/><path d="M2,10 H28" stroke="#eee" stroke-width="2.5"/><circle cx="9" cy="16" r="1.9" fill="#eee"/><circle cx="15" cy="16" r="1.9" fill="#eee"/><circle cx="21" cy="16" r="1.9" fill="#eee"/><circle cx="9" cy="22.5" r="1.9" fill="#eee"/><circle cx="15" cy="22.5" r="1.9" fill="#eee"/></svg>
<svg style="left:3469px;top:1062px;" width="14" height="20" viewBox="0 0 14 20"><polyline points="2,2 11,10 2,18" fill="none" stroke="#eee" stroke-width="2.5"/></svg>
<div class="a" style="left:3500px;top:1116px;width:30px;height:30px;border:2px solid #a8a8a8;border-radius:5px"></div>
<div class="t" id="f141" style="left:3595.6px;top:1117.9px;font-size:30px;color:#ffffff;transform:scaleX(0.9954);transform-origin:0 0;"><span>Order ID</span></div>
<div class="a" style="left:3500px;top:1176px;width:30px;height:30px;border:2px solid #a8a8a8;border-radius:5px"></div>
<div class="t" id="f142" style="left:3595.6px;top:1177.9px;font-size:30px;color:#ffffff;transform:scaleX(0.9576);transform-origin:0 0;"><span>Postal Code</span></div>
<div class="a" style="left:3500px;top:1236px;width:30px;height:30px;border:2px solid #a8a8a8;border-radius:5px"></div>
<div class="t" id="f143" style="left:3595.6px;top:1237.9px;font-size:30px;color:#ffffff;transform:scaleX(0.9983);transform-origin:0 0;"><span>Product ID</span></div>
<div class="a" style="left:3500px;top:1296px;width:30px;height:30px;border:2px solid #a8a8a8;border-radius:5px"></div>
<div class="t" id="f144" style="left:3595.6px;top:1297.9px;font-size:30px;color:#ffffff;transform:scaleX(0.9987);transform-origin:0 0;"><span>Product Name</span></div>
<div class="a" style="left:3500px;top:1356px;width:30px;height:30px;border:2px solid #a8a8a8;border-radius:5px"></div>
<div class="t" id="f145" style="left:3595.6px;top:1357.9px;font-size:30px;color:#ffffff;transform:scaleX(1.0353);transform-origin:0 0;"><span>Profit</span></div>
<svg style="left:3550px;top:1355px;" width="30" height="32" viewBox="0 0 30 32"><path d="M26,3 H4 L15,16 L4,29 H27" fill="none" stroke="#eee" stroke-width="2.5"/></svg>
<div class="a" style="left:3500px;top:1416px;width:30px;height:30px;border:2px solid #a8a8a8;border-radius:5px"></div>
<div class="t" id="f146" style="left:3595.6px;top:1417.9px;font-size:30px;color:#ffffff;transform:scaleX(1.0248);transform-origin:0 0;"><span>Quantity</span></div>
<svg style="left:3550px;top:1415px;" width="30" height="32" viewBox="0 0 30 32"><path d="M26,3 H4 L15,16 L4,29 H27" fill="none" stroke="#eee" stroke-width="2.5"/></svg>
<div class="a" style="left:3500px;top:1476px;width:30px;height:30px;border:2px solid #a8a8a8;border-radius:5px"></div>
<div class="t" id="f147" style="left:3595.6px;top:1477.9px;font-size:30px;color:#ffffff;transform:scaleX(0.9729);transform-origin:0 0;"><span>Region</span></div>
<div class="a" style="left:3500px;top:1536px;width:30px;height:30px;border:2px solid #a8a8a8;border-radius:5px"></div>
<div class="t" id="f148" style="left:3595.6px;top:1537.9px;font-size:30px;color:#ffffff;transform:scaleX(0.9891);transform-origin:0 0;"><span>Return Count</span></div>
<svg style="left:3550px;top:1534px;" width="30" height="34" viewBox="0 0 30 34"><rect x="2" y="2" width="26" height="30" rx="5" fill="none" stroke="#eee" stroke-width="2.5"/><rect x="7" y="7" width="16" height="6" rx="2" fill="none" stroke="#eee" stroke-width="2"/><circle cx="9" cy="19" r="1.9" fill="#eee"/><circle cx="15" cy="19" r="1.9" fill="#eee"/><circle cx="21" cy="19" r="1.9" fill="#eee"/><circle cx="9" cy="25.5" r="1.9" fill="#eee"/><circle cx="15" cy="25.5" r="1.9" fill="#eee"/><circle cx="21" cy="25.5" r="1.9" fill="#eee"/></svg>
<div class="a" style="left:3500px;top:1596px;width:30px;height:30px;border:2px solid #a8a8a8;border-radius:5px"></div>
<div class="t" id="f149" style="left:3595.6px;top:1597.9px;font-size:30px;color:#ffffff;transform:scaleX(0.9614);transform-origin:0 0;"><span>Return Rate</span></div>
<svg style="left:3550px;top:1594px;" width="30" height="34" viewBox="0 0 30 34"><rect x="2" y="2" width="26" height="30" rx="5" fill="none" stroke="#eee" stroke-width="2.5"/><rect x="7" y="7" width="16" height="6" rx="2" fill="none" stroke="#eee" stroke-width="2"/><circle cx="9" cy="19" r="1.9" fill="#eee"/><circle cx="15" cy="19" r="1.9" fill="#eee"/><circle cx="21" cy="19" r="1.9" fill="#eee"/><circle cx="9" cy="25.5" r="1.9" fill="#eee"/><circle cx="15" cy="25.5" r="1.9" fill="#eee"/><circle cx="21" cy="25.5" r="1.9" fill="#eee"/></svg>
<div class="a" style="left:3500px;top:1656px;width:30px;height:30px;border:2px solid #a8a8a8;border-radius:5px"></div>
<div class="t" id="f150" style="left:3595.6px;top:1657.9px;font-size:30px;color:#ffffff;transform:scaleX(0.9608);transform-origin:0 0;"><span>Row ID</span></div>
<svg style="left:3550px;top:1655px;" width="30" height="32" viewBox="0 0 30 32"><path d="M26,3 H4 L15,16 L4,29 H27" fill="none" stroke="#eee" stroke-width="2.5"/></svg>
<div class="a" style="left:3500px;top:1716px;width:30px;height:30px;border:2px solid #a8a8a8;border-radius:5px"></div>
<div class="t" id="f151" style="left:3595.6px;top:1717.9px;font-size:30px;color:#ffffff;transform:scaleX(0.8994);transform-origin:0 0;"><span>Sales</span></div>
<svg style="left:3550px;top:1715px;" width="30" height="32" viewBox="0 0 30 32"><path d="M26,3 H4 L15,16 L4,29 H27" fill="none" stroke="#eee" stroke-width="2.5"/></svg>
<div class="a" style="left:3500px;top:1776px;width:30px;height:30px;border:2px solid #a8a8a8;border-radius:5px"></div>
<div class="t" id="f152" style="left:3595.6px;top:1777.9px;font-size:30px;color:#ffffff;transform:scaleX(0.9475);transform-origin:0 0;"><span>Sales Target</span></div>
<svg style="left:3550px;top:1774px;" width="30" height="34" viewBox="0 0 30 34"><rect x="2" y="2" width="26" height="30" rx="5" fill="none" stroke="#eee" stroke-width="2.5"/><rect x="7" y="7" width="16" height="6" rx="2" fill="none" stroke="#eee" stroke-width="2"/><circle cx="9" cy="19" r="1.9" fill="#eee"/><circle cx="15" cy="19" r="1.9" fill="#eee"/><circle cx="21" cy="19" r="1.9" fill="#eee"/><circle cx="9" cy="25.5" r="1.9" fill="#eee"/><circle cx="15" cy="25.5" r="1.9" fill="#eee"/><circle cx="21" cy="25.5" r="1.9" fill="#eee"/></svg>
<div class="a" style="left:3500px;top:1836px;width:30px;height:30px;border:2px solid #a8a8a8;border-radius:5px"></div>
<div class="t" id="f153" style="left:3595.6px;top:1837.9px;font-size:30px;color:#ffffff;transform:scaleX(0.9952);transform-origin:0 0;"><span>Segment</span></div>
<div class="a" style="left:3500px;top:1896px;width:30px;height:30px;border:2px solid #a8a8a8;border-radius:5px"></div>
<div class="t" id="f154" style="left:3595.6px;top:1897.9px;font-size:30px;color:#ffffff;transform:scaleX(0.9829);transform-origin:0 0;"><span>Ship Date</span></div>
<svg style="left:3550px;top:1896px;" width="30" height="31" viewBox="0 0 30 31"><rect x="2" y="2" width="26" height="27" rx="5" fill="none" stroke="#eee" stroke-width="2.5"/><path d="M2,10 H28" stroke="#eee" stroke-width="2.5"/><circle cx="9" cy="16" r="1.9" fill="#eee"/><circle cx="15" cy="16" r="1.9" fill="#eee"/><circle cx="21" cy="16" r="1.9" fill="#eee"/><circle cx="9" cy="22.5" r="1.9" fill="#eee"/><circle cx="15" cy="22.5" r="1.9" fill="#eee"/></svg>
<svg style="left:3464px;top:1905px;" width="24" height="16" viewBox="0 0 24 16"><polyline points="2,2 12,12 22,2" fill="none" stroke="#eee" stroke-width="2.5"/></svg>
<div class="a" style="left:3500px;top:1955px;width:30px;height:30px;border:2px solid #a8a8a8;border-radius:5px"></div>
<svg style="left:3551px;top:1952px;" width="20" height="10" viewBox="0 0 20 10"><path d="M3,9 C3,2 15,2 15,9" fill="none" stroke="#eee" stroke-width="2.5"/></svg>
<div class="a" style="left:3391px;top:1960px;width:449px;height:20px;background:#141414"></div>
<div class="a" style="left:101px;top:1892px;width:2836px;height:88px;background:#2a2a2a"></div>
<svg style="left:137px;top:1909px;" width="40" height="40" viewBox="0 0 40 40"><rect x="2" y="2" width="36" height="27" rx="5" fill="none" stroke="#fff" stroke-width="3"/><path d="M20,29 V36 M10,37.5 H30" stroke="#fff" stroke-width="3"/></svg>
<div class="a" style="left:127px;top:1962px;width:60px;height:8px;background:#2bb09a;border-radius:4px"></div>
<svg style="left:253px;top:1907px;" width="30" height="45" viewBox="0 0 30 45"><rect x="2" y="2" width="25" height="41" rx="5" fill="none" stroke="#fff" stroke-width="3"/><path d="M10,35 H19" stroke="#fff" stroke-width="3"/></svg>
<svg style="left:336px;top:1925px;" width="14" height="22" viewBox="0 0 14 22"><path d="M11,2 L3,11 L11,20 Z" fill="none" stroke="#ddd" stroke-width="2"/></svg>
<svg style="left:389px;top:1925px;" width="14" height="22" viewBox="0 0 14 22"><path d="M3,2 L11,11 L3,20 Z" fill="none" stroke="#ddd" stroke-width="2"/></svg>
<div class="a" style="left:100px;top:1892px;width:2px;height:88px;background:#3a3a3a"></div>
<div class="a" style="left:420px;top:1892px;width:2px;height:88px;background:#3a3a3a"></div>
<div class="a" style="left:679px;top:1892px;width:2px;height:88px;background:#3a3a3a"></div>
<div class="a" style="left:1165px;top:1892px;width:2px;height:88px;background:#3a3a3a"></div>
<div class="a" style="left:422px;top:1970px;width:257px;height:10px;background:#2bb09a"></div>
<div class="t" id="f155" style="left:472.8px;top:1922.9px;font-size:29px;color:#ffffff;font-weight:bold;transform:scaleX(0.9580);transform-origin:0 0;"><span>OVER VIEW</span></div>
<div class="t" id="f156" style="left:655px;top:1906.5px;font-size:20.6px;color:#ffffff;font-weight:bold;transform:scaleX(1.0931);transform-origin:0 0;"><span>X</span></div>
<div class="t" id="f157" style="left:732px;top:1922.9px;font-size:29px;color:#ffffff;transform:scaleX(0.9234);transform-origin:0 0;"><span>SALES &amp; RETURNS INSIGHTS</span></div>
<div class="t" id="f158" style="left:1216px;top:1922.9px;font-size:29px;color:#ffffff;transform:scaleX(0.9591);transform-origin:0 0;"><span>PROFIT BREAKDOWN &amp; DRILLDOWN</span></div>
<div class="a" style="left:1761px;top:1892px;width:96px;height:88px;background:#2bb09a"></div>
<svg style="left:1796px;top:1921px;" width="30" height="30" viewBox="0 0 30 30"><path d="M15,1 V29 M1,15 H29" stroke="#222" stroke-width="6"/></svg>
<div class="a" style="left:0;top:1980px;width:3840px;height:62px;background:#151515;border-top:2px solid #4a4a4a;border-bottom:2px solid #3a3a3a"></div>
<div class="t" id="f159" style="left:10.9px;top:1997.6px;font-size:29px;color:#e6e6e6;transform:scaleX(0.9940);transform-origin:0 0;"><span>Page 1 of 3</span></div>
<div class="a" style="left:3312px;top:2009px;width:10px;height:3px;background:#ddd"></div>
<div class="a" style="left:3332px;top:2010px;width:251px;height:2px;background:#bbb"></div>
<div class="a" style="left:3426px;top:1997px;width:10px;height:28px;background:#cfcfcf;border-radius:2px"></div>
<div class="a" style="left:3458px;top:2003px;width:2px;height:16px;background:#bbb"></div>
<svg style="left:3598px;top:1999px;" width="24" height="24" viewBox="0 0 24 24"><path d="M12,2 V22 M2,12 H22" stroke="#ddd" stroke-width="3"/></svg>
<div class="t" id="f160" style="left:3651px;top:1996.5px;font-size:30px;color:#dddddd;transform:scaleX(0.9243);transform-origin:0 0;"><span>80%</span></div>
<svg style="left:3756px;top:1998px;" width="38" height="28" viewBox="0 0 38 28"><rect x="2" y="2" width="34" height="24" rx="4" fill="none" stroke="#ddd" stroke-width="2.5"/><path d="M10,9 V8 H14 M10,19 V20 H14 M28,9 V8 H24 M28,19 V20 H24" fill="none" stroke="#ddd" stroke-width="2"/></svg>
<div class="a" style="left:0;top:2042px;width:3840px;height:118px;background:#1c1c1c"></div>
<svg style="left:46px;top:2054px;" width="74" height="80" viewBox="0 0 74 80"><path d="M6,37 H30 A7,7 0 0 0 31,23.5 A10,10 0 0 0 12,20 A8.5,8.5 0 0 0 6,37Z" fill="#d2e4f7" stroke="#86bdf0" stroke-width="1.5"/><path d="M7,55 C20,58 40,52 52,42 L58,42 C59,62 47,73 33,73 C21,73 11,66 7,55Z" fill="#f0a428"/><path d="M31,66 H58 A7,7 0 0 0 58,52 A11,11 0 0 0 38,48 A9,9 0 0 0 31,66Z" fill="#d2e4f7" stroke="#86bdf0" stroke-width="1.5"/><circle cx="49.6" cy="21" r="19.6" fill="#e58a8a"/><text x="42" y="32" font-family="Liberation Sans" font-size="27" fill="#111">7</text></svg>
<div class="t" id="f161" style="left:127.2px;top:2064.7px;font-size:28.5px;color:#ffffff;transform:scaleX(0.9959);transform-origin:0 0;"><span>26°C</span></div>
<svg style="left:126px;top:2104px;" width="120" height="40" viewBox="0 0 120 40"><g fill="none" stroke="#cfcfcf" stroke-width="2.6" stroke-linecap="round" stroke-linejoin="round"><path d="M112,14.8 C106,13 100,14 100.5,18 C101,22 104,24.6 113.8,24.6 M100.5,24.6 H62"/><path d="M88.4,5 V24.6"/><path d="M81.7,19 V24.6"/><path d="M79.5,10 C82,8 84,9 82,11 C80,12 79,11 84,11"/><circle cx="71.5" cy="19.8" r="4.6"/><path d="M64.7,22 V34.5"/><path d="M2.2,4 V25 H23.6 M11,19.5 V25 M20,19.5 V25"/><path d="M6.7,7.6 H12.5 M6.7,9.8 H12.5"/><path d="M18,11.5 C20,9.5 22,10.5 20.5,12 C19,13 18.5,12.5 22,12.5"/><path d="M32.6,17.4 C34,24 31,30 25.4,31.7"/><path d="M38,16.5 H53 C46,17 40,20 40,24 C40,27 44,25 55,25"/></g><g fill="#cfcfcf"><circle cx="106.7" cy="8.5" r="1.8"/><circle cx="9.4" cy="29.5" r="1.6"/><circle cx="13.8" cy="29.5" r="1.6"/><circle cx="31.7" cy="11.2" r="1.6"/><circle cx="46" cy="29.9" r="1.7"/></g></svg>
<svg style="left:1170px;top:2073px;" width="58" height="58" viewBox="0 0 58 58"><defs><linearGradient id="wg" x1="0" y1="0" x2="1" y2="1"><stop offset="0" stop-color="#7ed0fb"/><stop offset="1" stop-color="#1e9ef0"/></linearGradient></defs><rect x="0" y="0" width="27" height="27" rx="2" fill="url(#wg)"/><rect x="30" y="0" width="27" height="27" rx="2" fill="url(#wg)"/><rect x="0" y="30" width="27" height="27" rx="2" fill="url(#wg)"/><rect x="30" y="30" width="27" height="27" rx="2" fill="url(#wg)"/></svg>
<div class="a" style="left:1264px;top:2061px;width:547px;height:78px;background:#2e2e2e;border-radius:39px;border:1px solid #3c3c3c"></div>
<svg style="left:1290px;top:2081px;" width="44" height="44" viewBox="0 0 44 44"><circle cx="18" cy="18" r="14" fill="none" stroke="#eee" stroke-width="4"/><line x1="28" y1="28" x2="40" y2="40" stroke="#eee" stroke-width="4" stroke-linecap="round"/></svg>
<div class="t" id="f162" style="left:1355px;top:2082.4px;font-size:36px;color:#dddddd;transform:scaleX(0.9011);transform-origin:0 0;"><span>Search</span></div>
<svg style="left:1840px;top:2072px;" width="62" height="58" viewBox="0 0 62 58"><rect x="0" y="18" width="44" height="40" rx="3" fill="#555"/><rect x="16" y="0" width="46" height="42" rx="3" fill="#d8d8d8"/></svg>
<svg style="left:1950px;top:2070px;" width="62" height="62" viewBox="0 0 62 62"><circle cx="31" cy="31" r="30" fill="#e33b2e"/><path d="M31,31 L5,46 A30,30 0 0 0 44,58 Z" fill="#2aa24a"/><path d="M31,31 L44,58 A30,30 0 0 0 60,22 H31Z" fill="#f9c01c"/><circle cx="31" cy="31" r="13" fill="#fff"/><circle cx="31" cy="31" r="10" fill="#1a73e8"/><circle cx="46" cy="14" r="13" fill="#c8a090" opacity=".9"/></svg>
<div class="a" style="left:1972px;top:2140px;width:17px;height:6px;background:#999;border-radius:3px"></div>
<svg style="left:2060px;top:2068px;" width="62" height="64" viewBox="0 0 62 64"><path d="M8,58 L12,44 A28,28 0 1 1 22,54 Z" fill="none" stroke="#25d366" stroke-width="5"/><path d="M20,20 C22,16 26,16 27,20 L28,26 C28,28 25,29 26,31 C28,36 32,40 36,41 C38,42 39,38 41,38 L46,40 C49,42 48,46 44,48 C36,50 18,38 20,20Z" fill="#25d366"/></svg>
<svg style="left:2172px;top:2070px;" width="66" height="60" viewBox="0 0 66 60"><circle cx="28" cy="33" r="27" fill="#2aa1da"/><path d="M12,32 L42,20 L36,46 L27,40 L22,46 L22,36 L38,24 L20,34Z" fill="#fff"/><rect x="30" y="2" width="34" height="24" rx="6" fill="#e5484d"/><text x="33" y="22" font-family="Liberation Sans" font-size="19" fill="#fff">.84</text></svg>
<div class="a" style="left:2193px;top:2140px;width:17px;height:6px;background:#999;border-radius:3px"></div>
<svg style="left:2280px;top:2074px;" width="62" height="56" viewBox="0 0 62 56"><path d="M0,8 A4,4 0 0 1 4,4 H22 L28,10 H58 A4,4 0 0 1 62,14 V52 H0Z" fill="#f7c948"/><rect x="10" y="34" width="42" height="22" rx="4" fill="#1f6fd1"/><path d="M20,40 H42" stroke="#7fb5f0" stroke-width="3"/></svg>
<svg style="left:2392px;top:2071px;" width="60" height="60" viewBox="0 0 60 60"><circle cx="30" cy="30" r="29" fill="#1ed760"/><path d="M14,22 C24,18 38,19 47,24 M16,31 C25,28 36,29 44,33 M18,40 C26,38 34,39 40,42" fill="none" stroke="#111" stroke-width="4" stroke-linecap="round"/></svg>
<div class="a" style="left:2413px;top:2140px;width:17px;height:6px;background:#999;border-radius:3px"></div>
<svg style="left:2504px;top:2060px;" width="70" height="72" viewBox="0 0 70 72"><rect x="0" y="12" width="56" height="58" rx="3" fill="#0a66c2"/><text x="8" y="60" font-family="Liberation Sans" font-weight="bold" font-size="40" fill="#fff">in</text><circle cx="56" cy="14" r="13" fill="#4cc2ff"/><text x="49" y="24" font-family="Liberation Sans" font-size="22" fill="#111">2</text></svg>
<div class="a" style="left:2591px;top:2050px;width:100px;height:98px;background:#2d2d2d;border-radius:6px;border:1px solid #3a3a3a"></div>
<svg style="left:2616px;top:2070px;" width="48" height="62" viewBox="0 0 48 62"><rect x="0" y="30" width="20" height="32" rx="2" fill="#f5d97a"/><rect x="12" y="16" width="20" height="46" rx="2" fill="#f2c12e"/><rect x="24" y="0" width="22" height="62" rx="2" fill="#d99e1c"/></svg>
<div class="a" style="left:2621px;top:2139px;width:40px;height:6px;background:#4cc2ff;border-radius:3px"></div>
<svg style="left:3268px;top:2087px;" width="30" height="18" viewBox="0 0 30 18"><polyline points="2,16 15,3 28,16" fill="none" stroke="#eee" stroke-width="3"/></svg>
<div class="t" id="f163" style="left:3349px;top:2086.5px;font-size:30px;color:#ffffff;transform:scaleX(0.8844);transform-origin:0 0;"><span>ENG</span></div>
<svg style="left:3452px;top:2082px;" width="42" height="38" viewBox="0 0 42 38"><path d="M2,13 A28,28 0 0 1 40,13 M8,20 A19,19 0 0 1 34,20 M14,27 A10,10 0 0 1 28,27" fill="none" stroke="#fff" stroke-width="3"/><circle cx="21" cy="34" r="3" fill="#fff"/></svg>
<svg style="left:3512px;top:2082px;" width="42" height="40" viewBox="0 0 42 40"><path d="M2,14 H10 L20,4 V36 L10,26 H2Z" fill="none" stroke="#fff" stroke-width="3"/><path d="M26,13 A9,9 0 0 1 26,27 M31,8 A15,15 0 0 1 31,32" fill="none" stroke="#fff" stroke-width="3"/><path d="M36,4 A22,22 0 0 1 36,36" fill="none" stroke="#777" stroke-width="2"/></svg>
<svg style="left:3572px;top:2080px;" width="42" height="40" viewBox="0 0 42 40"><rect x="2" y="10" width="32" height="22" rx="4" fill="none" stroke="#fff" stroke-width="3"/><rect x="34" y="16" width="5" height="10" fill="#fff"/><rect x="6" y="14" width="10" height="14" fill="#fff"/><path d="M12,0 L4,14 H12 L8,24" fill="none" stroke="#fff" stroke-width="3"/></svg>
<div class="t" id="f164" style="left:3667px;top:2064.8px;font-size:31px;color:#ffffff;transform:scaleX(0.9629);transform-origin:0 0;"><span>11:23 PM</span></div>
<div class="t" id="f165" style="left:3653px;top:2104.7px;font-size:31px;color:#ffffff;transform:scaleX(1.0118);transform-origin:0 0;"><span>9/10/2025</span></div>
<!-- watermark -->
<svg style="left:1670px;top:1895px;opacity:.42" width="500" height="240" viewBox="0 0 500 240">
<g fill="none" stroke="#c8c8c8" stroke-width="21" stroke-linecap="round">
<path d="M73,75 C30,70 20,105 30,120 C42,137 60,135 90,123 L430,123"/>
<path d="M97,21 V115"/>
<circle cx="171" cy="88" r="30"/>
<circle cx="437" cy="101" r="32"/>
<path d="M251,80 V117 M291,83 V117 M331,68 V117 M366,65 V117"/>
</g>
<g fill="#c8c8c8">
<circle cx="157" cy="24" r="13"/><circle cx="189" cy="24" r="13"/>
<circle cx="237" cy="52" r="13"/><circle cx="270" cy="52" r="13"/>
<text x="16" y="206" font-family="Liberation Sans" font-weight="bold" font-size="80" textLength="462" lengthAdjust="spacingAndGlyphs">mostaql.com</text>
</g></svg>

</body></html>
